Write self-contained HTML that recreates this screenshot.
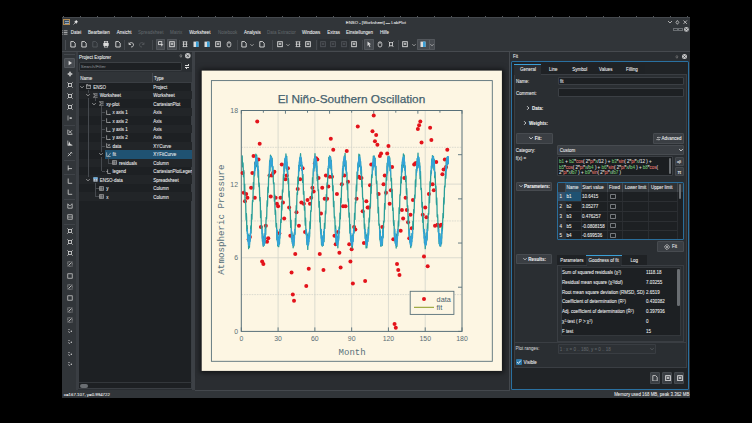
<!DOCTYPE html>
<html><head><meta charset="utf-8"><style>
html,body{margin:0;padding:0}
body{width:752px;height:423px;background:#000;overflow:hidden;position:relative;font-family:"Liberation Sans",sans-serif}
.a{position:absolute}
.t{position:absolute;white-space:nowrap;line-height:8px;height:8px;-webkit-text-stroke:0.06px currentColor}
</style></head><body>
<div class="a" style="left:62.00px;top:17.00px;width:628.00px;height:381.00px;background:#313539;"></div>
<div class="a" style="left:62.00px;top:17.00px;width:628.00px;height:0.80px;background:#44484d;"></div>
<div class="a" style="left:63.40px;top:15.90px;width:1.00px;height:1.10px;background:#5a5e62;"></div>
<div class="a" style="left:80.25px;top:15.90px;width:1.00px;height:1.10px;background:#5a5e62;"></div>
<div class="a" style="left:97.10px;top:15.90px;width:1.00px;height:1.10px;background:#5a5e62;"></div>
<div class="a" style="left:113.95px;top:15.90px;width:1.00px;height:1.10px;background:#5a5e62;"></div>
<div class="a" style="left:130.80px;top:15.90px;width:1.00px;height:1.10px;background:#5a5e62;"></div>
<div class="a" style="left:147.65px;top:15.90px;width:1.00px;height:1.10px;background:#5a5e62;"></div>
<div class="a" style="left:164.50px;top:15.90px;width:1.00px;height:1.10px;background:#5a5e62;"></div>
<div class="a" style="left:181.35px;top:15.90px;width:1.00px;height:1.10px;background:#5a5e62;"></div>
<div class="a" style="left:198.20px;top:15.90px;width:1.00px;height:1.10px;background:#5a5e62;"></div>
<div class="a" style="left:215.05px;top:15.90px;width:1.00px;height:1.10px;background:#5a5e62;"></div>
<div class="a" style="left:231.90px;top:15.90px;width:1.00px;height:1.10px;background:#5a5e62;"></div>
<div class="a" style="left:248.75px;top:15.90px;width:1.00px;height:1.10px;background:#5a5e62;"></div>
<div class="a" style="left:265.60px;top:15.90px;width:1.00px;height:1.10px;background:#5a5e62;"></div>
<div class="a" style="left:282.45px;top:15.90px;width:1.00px;height:1.10px;background:#5a5e62;"></div>
<div class="a" style="left:299.30px;top:15.90px;width:1.00px;height:1.10px;background:#5a5e62;"></div>
<div class="a" style="left:316.15px;top:15.90px;width:1.00px;height:1.10px;background:#5a5e62;"></div>
<div class="a" style="left:333.00px;top:15.90px;width:1.00px;height:1.10px;background:#5a5e62;"></div>
<div class="a" style="left:349.85px;top:15.90px;width:1.00px;height:1.10px;background:#5a5e62;"></div>
<div class="a" style="left:366.70px;top:15.90px;width:1.00px;height:1.10px;background:#5a5e62;"></div>
<div class="a" style="left:383.55px;top:15.90px;width:1.00px;height:1.10px;background:#5a5e62;"></div>
<div class="a" style="left:400.40px;top:15.90px;width:1.00px;height:1.10px;background:#5a5e62;"></div>
<div class="a" style="left:417.25px;top:15.90px;width:1.00px;height:1.10px;background:#5a5e62;"></div>
<div class="a" style="left:434.10px;top:15.90px;width:1.00px;height:1.10px;background:#5a5e62;"></div>
<div class="a" style="left:450.95px;top:15.90px;width:1.00px;height:1.10px;background:#5a5e62;"></div>
<div class="a" style="left:467.80px;top:15.90px;width:1.00px;height:1.10px;background:#5a5e62;"></div>
<div class="a" style="left:484.65px;top:15.90px;width:1.00px;height:1.10px;background:#5a5e62;"></div>
<div class="a" style="left:501.50px;top:15.90px;width:1.00px;height:1.10px;background:#5a5e62;"></div>
<div class="a" style="left:518.35px;top:15.90px;width:1.00px;height:1.10px;background:#5a5e62;"></div>
<div class="a" style="left:535.20px;top:15.90px;width:1.00px;height:1.10px;background:#5a5e62;"></div>
<div class="a" style="left:552.05px;top:15.90px;width:1.00px;height:1.10px;background:#5a5e62;"></div>
<div class="a" style="left:568.90px;top:15.90px;width:1.00px;height:1.10px;background:#5a5e62;"></div>
<div class="a" style="left:585.75px;top:15.90px;width:1.00px;height:1.10px;background:#5a5e62;"></div>
<div class="a" style="left:602.60px;top:15.90px;width:1.00px;height:1.10px;background:#5a5e62;"></div>
<div class="a" style="left:619.45px;top:15.90px;width:1.00px;height:1.10px;background:#5a5e62;"></div>
<div class="a" style="left:636.30px;top:15.90px;width:1.00px;height:1.10px;background:#5a5e62;"></div>
<div class="a" style="left:653.15px;top:15.90px;width:1.00px;height:1.10px;background:#5a5e62;"></div>
<div class="a" style="left:670.00px;top:15.90px;width:1.00px;height:1.10px;background:#5a5e62;"></div>
<div class="a" style="left:686.85px;top:15.90px;width:1.00px;height:1.10px;background:#5a5e62;"></div>
<div class="t" style="left:345.80px;top:18.70px;font-size:4.31px;color:#eceded;font-weight:normal;">ENSO - [Worksheet] — LabPlot</div>
<div class="a" style="left:62.00px;top:50.90px;width:628.00px;height:1.40px;background:#464a4f;"></div>
<div class="a" style="left:63.20px;top:19.10px;width:6.70px;height:5.80px;background:#3e4f60;box-shadow:inset 0 0 0 1px #b08850;"></div>
<div class="a" style="left:64.50px;top:20.80px;width:4.10px;height:0.60px;background:#8aa0b8;"></div>
<div class="a" style="left:64.50px;top:22.60px;width:4.10px;height:0.60px;background:#8aa0b8;"></div>
<svg class="a" style="left:72.5px;top:19.6px" width="5" height="5" viewBox="0 0 5 5"><path d="M0.5 4.5L2 3M1.6 1.8l1.6 1.6 1.3-1.8-1.1-1.1z" fill="#e8e8e8" stroke="#e8e8e8" stroke-width="0.6"/></svg>
<svg class="a" style="left:665.60px;top:18.00px;overflow:visible" width="8" height="8" viewBox="-4 -4 8 8"><path d="M-2.0 -1.0 L0 1.0 L2.0 -1.0" fill="none" stroke="#d0d0d0" stroke-width="0.8"/></svg>
<svg class="a" style="left:674.90px;top:19.60px;overflow:visible" width="4.8" height="4.8" viewBox="-2.4 -2.4 4.8 4.8"><path d="M0 -1.9L1.4249999999999998 0L0 1.9L-1.4249999999999998 0z" fill="none" stroke="#d0d0d0" stroke-width="0.75"/></svg>
<svg class="a" style="left:682.90px;top:19.80px;overflow:visible" width="4.4" height="4.4" viewBox="-2.2 -2.2 4.4 4.4"><path d="M-1.7 -1.7L1.7 1.7M1.7 -1.7L-1.7 1.7" stroke="#d0d0d0" stroke-width="0.8"/></svg>
<svg class="a" style="left:61.5px;top:29.6px" width="6" height="5" viewBox="0 0 6 5"><path d="M0.3 0.8h1M0.3 2.5h1M0.3 4.2h1M2 0.8h3.5M2 2.5h3.5M2 4.2h3.5" stroke="#d8d8d8" stroke-width="0.7"/></svg>
<div class="t" style="left:70.80px;top:28.60px;font-size:4.5px;color:#eff0f1;font-weight:normal;">Datei</div>
<div class="t" style="left:88.00px;top:28.60px;font-size:4.5px;color:#eff0f1;font-weight:normal;">Bearbeiten</div>
<div class="t" style="left:116.70px;top:28.60px;font-size:4.5px;color:#eff0f1;font-weight:normal;">Ansicht</div>
<div class="t" style="left:138.00px;top:28.60px;font-size:4.5px;color:#5f6468;font-weight:normal;">Spreadsheet</div>
<div class="t" style="left:170.00px;top:28.60px;font-size:4.5px;color:#5f6468;font-weight:normal;">Matrix</div>
<div class="t" style="left:189.20px;top:28.60px;font-size:4.5px;color:#eff0f1;font-weight:normal;">Worksheet</div>
<div class="t" style="left:217.90px;top:28.60px;font-size:4.5px;color:#5f6468;font-weight:normal;">Notebook</div>
<div class="t" style="left:244.00px;top:28.60px;font-size:4.5px;color:#eff0f1;font-weight:normal;">Analysis</div>
<div class="t" style="left:267.00px;top:28.60px;font-size:4.5px;color:#5f6468;font-weight:normal;">Data Extractor</div>
<div class="t" style="left:302.10px;top:28.60px;font-size:4.5px;color:#eff0f1;font-weight:normal;">Windows</div>
<div class="t" style="left:327.30px;top:28.60px;font-size:4.5px;color:#eff0f1;font-weight:normal;">Extras</div>
<div class="t" style="left:346.00px;top:28.60px;font-size:4.5px;color:#eff0f1;font-weight:normal;">Einstellungen</div>
<div class="t" style="left:380.00px;top:28.60px;font-size:4.5px;color:#eff0f1;font-weight:normal;">Hilfe</div>
<div class="a" style="left:673.40px;top:27.60px;width:4.40px;height:3.60px;box-shadow:inset 0 0 0 1px #6a6e72;"></div>
<div class="a" style="left:678.20px;top:27.60px;width:4.40px;height:3.60px;box-shadow:inset 0 0 0 1px #6a6e72;"></div>
<svg class="a" style="left:683.90px;top:27.00px" width="4.8" height="4.8" viewBox="-2.4 -2.4 4.8 4.8"><circle r="2.4" fill="#c4c5c6"/><path d="M-1.08 -1.08L1.08 1.08M1.08 -1.08L-1.08 1.08" stroke="#33373b" stroke-width="0.7"/></svg>
<div class="a" style="left:64.80px;top:39.50px;width:1.10px;height:10.00px;background:#4a4e53;"></div>
<svg class="a" style="left:69.90px;top:41.40px" width="6" height="6.5" viewBox="0 0 6 6.5"><path d="M0.8 0.6h2.8l1.6 1.6v3.8h-4.4z" fill="none" stroke="#dcdcdc" stroke-width="0.9"/></svg>
<svg class="a" style="left:81.20px;top:41.40px" width="6" height="6.5" viewBox="0 0 6 6.5"><path d="M0.8 0.6h2.8l1.6 1.6v3.8h-4.4z" fill="none" stroke="#dcdcdc" stroke-width="0.9"/></svg>
<svg class="a" style="left:92.40px;top:41.40px" width="6" height="6.5" viewBox="0 0 6 6.5"><path d="M0.8 0.6h2.8l1.6 1.6v3.8h-4.4z" fill="none" stroke="#55595d" stroke-width="0.9"/></svg>
<svg class="a" style="left:103.20px;top:41.40px" width="6" height="6.5" viewBox="0 0 6 6.5"><rect x="0.3" y="2" width="5.4" height="2.8" fill="#dcdcdc"/><rect x="1.3" y="0.5" width="3.4" height="1.5" fill="none" stroke="#dcdcdc" stroke-width="0.7"/><rect x="1.3" y="4.6" width="3.4" height="1.5" fill="none" stroke="#dcdcdc" stroke-width="0.7"/></svg>
<svg class="a" style="left:114.60px;top:41.40px" width="6" height="6.5" viewBox="0 0 6 6.5"><path d="M0.8 0.6h2.8l1.6 1.6v3.8h-4.4z" fill="none" stroke="#dcdcdc" stroke-width="0.9"/></svg>
<div class="a" style="left:123.60px;top:39.50px;width:0.90px;height:10.00px;background:#43474c;"></div>
<svg class="a" style="left:128.20px;top:41.40px" width="6" height="6.5" viewBox="0 0 6 6.5"><path d="M1 1.5v2h2 M1.2 3.2a2.2 2.2 0 1 1 1.8 2.8" fill="none" stroke="#dcdcdc" stroke-width="0.8"/></svg>
<svg class="a" style="left:139.20px;top:41.40px" width="6" height="6.5" viewBox="0 0 6 6.5"><path d="M5 1.5v2h-2 M4.8 3.2a2.2 2.2 0 1 0 -1.8 2.8" fill="none" stroke="#55595d" stroke-width="0.8"/></svg>
<div class="a" style="left:151.60px;top:39.50px;width:0.90px;height:10.00px;background:#43474c;"></div>
<div class="a" style="left:155.70px;top:39.20px;width:9.60px;height:10.40px;background:#474b50;box-shadow:inset 0 0 0 1px #53575c;border-radius:1px"></div>
<div class="a" style="left:166.50px;top:39.20px;width:10.10px;height:10.40px;background:#474b50;box-shadow:inset 0 0 0 1px #53575c;border-radius:1px"></div>
<svg class="a" style="left:157.70px;top:41.40px" width="6" height="6.5" viewBox="0 0 6 6.5"><rect x="0.6" y="0.6" width="3.2" height="3" fill="none" stroke="#dcdcdc" stroke-width="0.8"/><path d="M2.5 2.5l3 1.2-1.2 0.5-0.5 1.6z" fill="#dcdcdc"/></svg>
<svg class="a" style="left:168.70px;top:41.40px" width="6" height="6.5" viewBox="0 0 6 6.5"><rect x="0.7" y="0.7" width="4.6" height="5" fill="none" stroke="#dcdcdc" stroke-width="0.9"/><rect x="1.8" y="1.8" width="2.4" height="2.2" fill="#dcdcdc" opacity="0.7"/></svg>
<div class="a" style="left:179.30px;top:39.50px;width:0.90px;height:10.00px;background:#43474c;"></div>
<svg class="a" style="left:181.70px;top:41.40px" width="6" height="6.5" viewBox="0 0 6 6.5"><path d="M0.6 0.8h4.8M0.6 3.2h4.8M0.6 5.6h4.8M1.5 0.8v4.8M4.5 0.8v4.8" fill="none" stroke="#dcdcdc" stroke-width="0.8"/></svg>
<svg class="a" style="left:192.90px;top:41.40px" width="6" height="6.5" viewBox="0 0 6 6.5"><rect x="0.5" y="0.6" width="5" height="5.4" fill="#dcdcdc"/><rect x="3" y="0.6" width="2.5" height="5.4" fill="#3a9fd6"/></svg>
<svg class="a" style="left:204.40px;top:41.40px" width="6" height="6.5" viewBox="0 0 6 6.5"><rect x="0.5" y="0.6" width="5" height="5.4" fill="#dcdcdc"/><rect x="3" y="0.6" width="2.5" height="5.4" fill="#3a9fd6"/></svg>
<svg class="a" style="left:215.20px;top:41.40px" width="6" height="6.5" viewBox="0 0 6 6.5"><rect x="0.7" y="0.7" width="4.6" height="5" fill="none" stroke="#dcdcdc" stroke-width="0.9"/><rect x="1.8" y="1.8" width="2.4" height="2.2" fill="#dcdcdc" opacity="0.7"/></svg>
<svg class="a" style="left:225.90px;top:41.40px" width="6" height="6.5" viewBox="0 0 6 6.5"><rect x="1.2" y="0.8" width="3.6" height="5.2" rx="1.8" fill="none" stroke="#dcdcdc" stroke-width="0.8"/><path d="M3 1v2" stroke="#dcdcdc" stroke-width="0.7"/></svg>
<div class="a" style="left:237.40px;top:39.50px;width:0.90px;height:10.00px;background:#43474c;"></div>
<svg class="a" style="left:241.30px;top:41.40px" width="6" height="6.5" viewBox="0 0 6 6.5"><path d="M0.8 0.6h2.8l1.6 1.6v3.8h-4.4z" fill="none" stroke="#dcdcdc" stroke-width="0.9"/></svg>
<svg class="a" style="left:248.20px;top:40.60px;overflow:visible" width="8" height="8" viewBox="-4 -4 8 8"><path d="M-1.6 -0.8 L0 0.8 L1.6 -0.8" fill="none" stroke="#c8c8c8" stroke-width="0.7"/></svg>
<svg class="a" style="left:258.50px;top:41.40px" width="6" height="6.5" viewBox="0 0 6 6.5"><path d="M0.8 0.6h2.8l1.6 1.6v3.8h-4.4z" fill="none" stroke="#dcdcdc" stroke-width="0.9"/></svg>
<div class="a" style="left:271.70px;top:39.50px;width:0.90px;height:10.00px;background:#43474c;"></div>
<svg class="a" style="left:276.50px;top:41.40px" width="6" height="6.5" viewBox="0 0 6 6.5"><rect x="0.7" y="0.7" width="4.6" height="5" fill="none" stroke="#dcdcdc" stroke-width="0.9"/><rect x="1.8" y="1.8" width="2.4" height="2.2" fill="#dcdcdc" opacity="0.7"/></svg>
<svg class="a" style="left:284.10px;top:40.60px;overflow:visible" width="8" height="8" viewBox="-4 -4 8 8"><path d="M-1.6 -0.8 L0 0.8 L1.6 -0.8" fill="none" stroke="#c8c8c8" stroke-width="0.7"/></svg>
<svg class="a" style="left:294.90px;top:41.40px" width="6" height="6.5" viewBox="0 0 6 6.5"><path d="M0.6 0.8h4.8M0.6 3.2h4.8M0.6 5.6h4.8M1.5 0.8v4.8M4.5 0.8v4.8" fill="none" stroke="#dcdcdc" stroke-width="0.8"/></svg>
<svg class="a" style="left:305.20px;top:41.40px" width="6" height="6.5" viewBox="0 0 6 6.5"><rect x="0.7" y="0.7" width="4.6" height="5" fill="none" stroke="#dcdcdc" stroke-width="0.9"/><rect x="1.8" y="1.8" width="2.4" height="2.2" fill="#dcdcdc" opacity="0.7"/></svg>
<div class="a" style="left:315.60px;top:39.50px;width:0.90px;height:10.00px;background:#43474c;"></div>
<div class="a" style="left:317.60px;top:39.20px;width:31.10px;height:10.40px;background:#2c3034;border-radius:1px"></div>
<svg class="a" style="left:319.60px;top:41.40px" width="6" height="6.5" viewBox="0 0 6 6.5"><rect x="0.7" y="0.7" width="4.6" height="5" fill="none" stroke="#50545a" stroke-width="0.9"/><rect x="1.8" y="1.8" width="2.4" height="2.2" fill="#50545a" opacity="0.7"/></svg>
<svg class="a" style="left:330.30px;top:41.40px" width="6" height="6.5" viewBox="0 0 6 6.5"><rect x="0.7" y="0.7" width="4.6" height="5" fill="none" stroke="#50545a" stroke-width="0.9"/><rect x="1.8" y="1.8" width="2.4" height="2.2" fill="#50545a" opacity="0.7"/></svg>
<svg class="a" style="left:341.10px;top:41.40px" width="6" height="6.5" viewBox="0 0 6 6.5"><rect x="0.7" y="0.7" width="4.6" height="5" fill="none" stroke="#50545a" stroke-width="0.9"/><rect x="1.8" y="1.8" width="2.4" height="2.2" fill="#50545a" opacity="0.7"/></svg>
<svg class="a" style="left:351.40px;top:41.40px" width="6" height="6.5" viewBox="0 0 6 6.5"><rect x="0.7" y="0.7" width="4.6" height="5" fill="none" stroke="#dcdcdc" stroke-width="0.9"/><rect x="1.8" y="1.8" width="2.4" height="2.2" fill="#dcdcdc" opacity="0.7"/></svg>
<div class="a" style="left:361.90px;top:39.50px;width:0.90px;height:10.00px;background:#43474c;"></div>
<div class="a" style="left:364.20px;top:39.20px;width:9.60px;height:10.40px;background:#474b50;box-shadow:inset 0 0 0 1px #53575c;border-radius:1px"></div>
<svg class="a" style="left:366.10px;top:41.40px" width="6" height="6.5" viewBox="0 0 6 6.5"><path d="M1.5 0.6l3.5 2.7-1.6 0.3 1 2.2-0.8 0.4-1-2.2-1.1 1z" fill="#dcdcdc"/></svg>
<svg class="a" style="left:377.00px;top:41.40px" width="6" height="6.5" viewBox="0 0 6 6.5"><rect x="1.2" y="0.8" width="3.6" height="5.2" rx="1.8" fill="none" stroke="#dcdcdc" stroke-width="0.8"/><path d="M3 1v2" stroke="#dcdcdc" stroke-width="0.7"/></svg>
<svg class="a" style="left:388.20px;top:41.40px" width="6" height="6.5" viewBox="0 0 6 6.5"><path d="M0.6 0.6l1.4 1.4M5.4 0.6l-1.4 1.4M0.6 5.9l1.4-1.4M5.4 5.9l-1.4-1.4" stroke="#dcdcdc" stroke-width="0.8"/><rect x="1.6" y="1.7" width="2.8" height="3.1" fill="none" stroke="#dcdcdc" stroke-width="0.8"/></svg>
<div class="a" style="left:397.90px;top:39.50px;width:0.90px;height:10.00px;background:#43474c;"></div>
<svg class="a" style="left:402.10px;top:41.40px" width="6" height="6.5" viewBox="0 0 6 6.5"><rect x="0.7" y="0.7" width="4.6" height="5" fill="none" stroke="#dcdcdc" stroke-width="0.9"/><rect x="1.8" y="1.8" width="2.4" height="2.2" fill="#dcdcdc" opacity="0.7"/></svg>
<svg class="a" style="left:409.80px;top:40.60px;overflow:visible" width="8" height="8" viewBox="-4 -4 8 8"><path d="M-1.6 -0.8 L0 0.8 L1.6 -0.8" fill="none" stroke="#c8c8c8" stroke-width="0.7"/></svg>
<div class="a" style="left:417.00px;top:38.90px;width:17.90px;height:10.70px;background:#474b50;box-shadow:inset 0 0 0 1px #53575c;border-radius:1px"></div>
<div class="a" style="left:429.10px;top:39.50px;width:0.50px;height:9.50px;background:#5a5e63;"></div>
<svg class="a" style="left:420.10px;top:41.40px" width="6" height="6.5" viewBox="0 0 6 6.5"><rect x="0.5" y="0.6" width="5" height="5.4" fill="#dcdcdc"/><rect x="3" y="0.6" width="2.5" height="5.4" fill="#3a9fd6"/></svg>
<svg class="a" style="left:427.70px;top:40.60px;overflow:visible" width="8" height="8" viewBox="-4 -4 8 8"><path d="M-1.6 -0.8 L0 0.8 L1.6 -0.8" fill="none" stroke="#c8c8c8" stroke-width="0.7"/></svg>
<div class="a" style="left:64.00px;top:54.40px;width:11.00px;height:0.80px;background:#44484d;"></div>
<div class="a" style="left:64.10px;top:57.50px;width:10.90px;height:10.30px;background:#464a4f;box-shadow:inset 0 0 0 1px #53575c;border-radius:1.5px"></div>
<svg class="a" style="left:66.80px;top:60.00px" width="6" height="6" viewBox="0 0 6 6"><path d="M1.6 0.8L5 3L1.6 5.2z" fill="#d8d8d8"/></svg>
<svg class="a" style="left:66.80px;top:70.60px" width="6" height="6" viewBox="0 0 6 6"><path d="M3 0.5v5M0.5 3h5" stroke="#d8d8d8" stroke-width="0.9"/><circle cx="3" cy="3" r="1.4" fill="none" stroke="#d8d8d8" stroke-width="0.7"/></svg>
<svg class="a" style="left:66.80px;top:81.60px" width="6" height="6" viewBox="0 0 6 6"><rect x="1.5" y="1.5" width="3" height="3" fill="none" stroke="#d8d8d8" stroke-width="0.8"/><path d="M0.3 0.3l1.3 1.3M5.7 0.3l-1.3 1.3M0.3 5.7l1.3-1.3M5.7 5.7l-1.3-1.3" stroke="#d8d8d8" stroke-width="0.7"/></svg>
<svg class="a" style="left:66.80px;top:93.00px" width="6" height="6" viewBox="0 0 6 6"><rect x="1.5" y="1.5" width="3" height="3" fill="none" stroke="#d8d8d8" stroke-width="0.8"/><path d="M0.3 0.3l1.3 1.3M5.7 0.3l-1.3 1.3M0.3 5.7l1.3-1.3M5.7 5.7l-1.3-1.3" stroke="#d8d8d8" stroke-width="0.7"/></svg>
<svg class="a" style="left:66.80px;top:104.00px" width="6" height="6" viewBox="0 0 6 6"><rect x="1.5" y="1.5" width="3" height="3" fill="none" stroke="#d8d8d8" stroke-width="0.8"/><path d="M0.3 0.3l1.3 1.3M5.7 0.3l-1.3 1.3M0.3 5.7l1.3-1.3M5.7 5.7l-1.3-1.3" stroke="#d8d8d8" stroke-width="0.7"/></svg>
<svg class="a" style="left:66.80px;top:115.00px" width="6" height="6" viewBox="0 0 6 6"><path d="M1 0.5v5" stroke="#d8d8d8" stroke-width="0.6"/><rect x="2.6" y="2.2" width="2.2" height="1.8" fill="#d8d8d8" opacity="0.8"/></svg>
<svg class="a" style="left:66.80px;top:129.00px" width="6" height="6" viewBox="0 0 6 6"><path d="M0.8 0.6v4.8h4.6M1.6 1.2l3.4 3.6M5 1.2l-3 3" stroke="#d8d8d8" stroke-width="0.7" fill="none"/></svg>
<svg class="a" style="left:66.80px;top:139.90px" width="6" height="6" viewBox="0 0 6 6"><path d="M0.8 0.6v4.8h4.6" stroke="#d8d8d8" stroke-width="0.7" fill="none"/><path d="M1.2 5l1-3.5 1.2 2.5 2 1z" fill="#d8d8d8"/></svg>
<svg class="a" style="left:66.80px;top:150.80px" width="6" height="6" viewBox="0 0 6 6"><path d="M0.8 5.2l4-4M1.5 2.5l2 2M3.5 1l1.5 1.5" stroke="#d8d8d8" stroke-width="0.8"/></svg>
<svg class="a" style="left:66.80px;top:164.60px" width="6" height="6" viewBox="0 0 6 6"><path d="M1.2 0.5v5M1.2 3.6h3.8" stroke="#d8d8d8" stroke-width="0.8" fill="none"/></svg>
<svg class="a" style="left:66.80px;top:178.30px" width="6" height="6" viewBox="0 0 6 6"><path d="M1.2 0.5v4.8h4" stroke="#d8d8d8" stroke-width="0.8" fill="none"/></svg>
<svg class="a" style="left:66.80px;top:189.20px" width="6" height="6" viewBox="0 0 6 6"><path d="M1.2 0.5v4.8h4" stroke="#d8d8d8" stroke-width="0.8" fill="none"/></svg>
<svg class="a" style="left:66.80px;top:202.90px" width="6" height="6" viewBox="0 0 6 6"><path d="M0.8 0.8v4.4h4.4v-4.4M0.8 0.8l1.8 2.2 1-1 1.6-1.2" stroke="#d8d8d8" stroke-width="0.7" fill="none"/></svg>
<svg class="a" style="left:66.80px;top:214.00px" width="6" height="6" viewBox="0 0 6 6"><rect x="0.8" y="0.8" width="4.4" height="4.4" fill="none" stroke="#d8d8d8" stroke-width="0.7"/><path d="M0.8 3h4.4" stroke="#d8d8d8" stroke-width="0.6"/></svg>
<svg class="a" style="left:66.80px;top:227.50px" width="6" height="6" viewBox="0 0 6 6"><rect x="1.5" y="1.5" width="3" height="3" fill="none" stroke="#d8d8d8" stroke-width="0.8"/><path d="M0.3 0.3l1.3 1.3M5.7 0.3l-1.3 1.3M0.3 5.7l1.3-1.3M5.7 5.7l-1.3-1.3" stroke="#d8d8d8" stroke-width="0.7"/></svg>
<svg class="a" style="left:66.80px;top:238.90px" width="6" height="6" viewBox="0 0 6 6"><rect x="1.5" y="1.5" width="3" height="3" fill="none" stroke="#d8d8d8" stroke-width="0.8"/><path d="M0.3 0.3l1.3 1.3M5.7 0.3l-1.3 1.3M0.3 5.7l1.3-1.3M5.7 5.7l-1.3-1.3" stroke="#d8d8d8" stroke-width="0.7"/></svg>
<svg class="a" style="left:66.80px;top:250.00px" width="6" height="6" viewBox="0 0 6 6"><rect x="1.5" y="1.5" width="3" height="3" fill="none" stroke="#d8d8d8" stroke-width="0.8"/><path d="M0.3 0.3l1.3 1.3M5.7 0.3l-1.3 1.3M0.3 5.7l1.3-1.3M5.7 5.7l-1.3-1.3" stroke="#d8d8d8" stroke-width="0.7"/></svg>
<svg class="a" style="left:66.80px;top:261.20px" width="6" height="6" viewBox="0 0 6 6"><rect x="0.8" y="0.8" width="4.4" height="4.4" fill="none" stroke="#d8d8d8" stroke-width="0.6" stroke-dasharray="0.8 0.6"/><path d="M1.5 4.5l3-3" stroke="#d8d8d8" stroke-width="0.8"/></svg>
<svg class="a" style="left:66.80px;top:273.00px" width="6" height="6" viewBox="0 0 6 6"><rect x="0.8" y="0.8" width="4.4" height="4.4" fill="none" stroke="#d8d8d8" stroke-width="0.7"/></svg>
<svg class="a" style="left:66.80px;top:283.90px" width="6" height="6" viewBox="0 0 6 6"><rect x="0.8" y="0.8" width="4.4" height="4.4" fill="none" stroke="#d8d8d8" stroke-width="0.6" stroke-dasharray="0.8 0.6"/><path d="M1.5 4.5l3-3" stroke="#d8d8d8" stroke-width="0.8"/></svg>
<svg class="a" style="left:66.80px;top:294.80px" width="6" height="6" viewBox="0 0 6 6"><rect x="0.8" y="0.8" width="4.4" height="4.4" fill="none" stroke="#d8d8d8" stroke-width="0.7"/></svg>
<svg class="a" style="left:66.80px;top:306.70px" width="6" height="6" viewBox="0 0 6 6"><rect x="0.8" y="0.8" width="4.4" height="4.4" fill="none" stroke="#d8d8d8" stroke-width="0.6" stroke-dasharray="0.8 0.6"/><path d="M1.5 4.5l3-3" stroke="#d8d8d8" stroke-width="0.8"/></svg>
<svg class="a" style="left:66.80px;top:317.10px" width="6" height="6" viewBox="0 0 6 6"><rect x="0.8" y="0.8" width="4.4" height="4.4" fill="none" stroke="#d8d8d8" stroke-width="0.6" stroke-dasharray="0.8 0.6"/><path d="M1.5 4.5l3-3" stroke="#d8d8d8" stroke-width="0.8"/></svg>
<svg class="a" style="left:66.80px;top:328.00px" width="6" height="6" viewBox="0 0 6 6"><circle cx="2" cy="1.5" r="0.6" fill="#d8d8d8"/><circle cx="4.3" cy="3.2" r="0.7" fill="#d8d8d8"/><path d="M1.2 3.5q1 0 1.5 1.5" stroke="#d8d8d8" stroke-width="0.6" fill="none"/></svg>
<svg class="a" style="left:66.80px;top:339.40px" width="6" height="6" viewBox="0 0 6 6"><circle cx="2" cy="1.5" r="0.6" fill="#d8d8d8"/><circle cx="4.3" cy="3.2" r="0.7" fill="#d8d8d8"/><path d="M1.2 3.5q1 0 1.5 1.5" stroke="#d8d8d8" stroke-width="0.6" fill="none"/></svg>
<svg class="a" style="left:66.80px;top:351.00px" width="6" height="6" viewBox="0 0 6 6"><circle cx="2" cy="1.5" r="0.6" fill="#d8d8d8"/><circle cx="4.3" cy="3.2" r="0.7" fill="#d8d8d8"/><path d="M1.2 3.5q1 0 1.5 1.5" stroke="#d8d8d8" stroke-width="0.6" fill="none"/></svg>
<svg class="a" style="left:66.80px;top:360.60px" width="6" height="6" viewBox="0 0 6 6"><circle cx="2" cy="1.5" r="0.6" fill="#d8d8d8"/><circle cx="4.3" cy="3.2" r="0.7" fill="#d8d8d8"/><path d="M1.2 3.5q1 0 1.5 1.5" stroke="#d8d8d8" stroke-width="0.6" fill="none"/></svg>
<div class="a" style="left:64.00px;top:124.70px;width:11.00px;height:0.80px;background:#3f4348;"></div>
<div class="a" style="left:64.00px;top:160.30px;width:11.00px;height:0.80px;background:#3f4348;"></div>
<div class="a" style="left:64.00px;top:174.00px;width:11.00px;height:0.80px;background:#3f4348;"></div>
<div class="a" style="left:64.00px;top:199.00px;width:11.00px;height:0.80px;background:#3f4348;"></div>
<div class="a" style="left:64.00px;top:224.00px;width:11.00px;height:0.80px;background:#3f4348;"></div>
<div class="a" style="left:76.40px;top:52.00px;width:1.50px;height:338.00px;background:#3a3e43;"></div>
<div class="a" style="left:77.90px;top:52.10px;width:114.30px;height:338.30px;background:#2a2e32;"></div>
<div class="t" style="left:79.00px;top:53.70px;font-size:4.5px;color:#eff0f1;font-weight:normal;">Project Explorer</div>
<svg class="a" style="left:178.60px;top:54.40px;overflow:visible" width="3.8" height="3.8" viewBox="-1.9 -1.9 3.8 3.8"><path d="M0 -1.4L1.0499999999999998 0L0 1.4L-1.0499999999999998 0z" fill="none" stroke="#a8a8a8" stroke-width="0.6"/></svg>
<svg class="a" style="left:185.20px;top:53.40px" width="5.6" height="5.6" viewBox="-2.8 -2.8 5.6 5.6"><circle r="2.8" fill="#c4c5c6"/><path d="M-1.26 -1.26L1.26 1.26M1.26 -1.26L-1.26 1.26" stroke="#33373b" stroke-width="0.7"/></svg>
<div class="a" style="left:79.00px;top:61.60px;width:103.00px;height:9.10px;background:#1d2023;box-shadow:inset 0 0 0 1px #3c4044;border-radius:1.5px"></div>
<div class="t" style="left:80.80px;top:63.10px;font-size:4.4px;color:#7d8185;font-weight:normal;">Search/Filter</div>
<div class="a" style="left:184.60px;top:65.00px;width:4.80px;height:0.55px;background:#d8d8d8;"></div>
<div class="a" style="left:184.60px;top:67.40px;width:4.80px;height:0.55px;background:#d8d8d8;"></div>
<div class="a" style="left:187.60px;top:64.30px;width:0.60px;height:1.90px;background:#d8d8d8;"></div>
<div class="a" style="left:185.80px;top:66.70px;width:0.60px;height:1.90px;background:#d8d8d8;"></div>
<div class="a" style="left:78.40px;top:71.70px;width:113.90px;height:317.70px;background:#1d2023;box-shadow:inset 0 0 0 1px #3a3e43;"></div>
<div class="a" style="left:79.00px;top:72.20px;width:112.60px;height:10.20px;background:#303438;"></div>
<div class="a" style="left:152.30px;top:73.00px;width:0.60px;height:9.00px;background:#45494e;"></div>
<div class="a" style="left:79.00px;top:82.00px;width:112.60px;height:0.60px;background:#3a3e43;"></div>
<div class="t" style="left:80.20px;top:74.50px;font-size:4.5px;color:#eff0f1;font-weight:normal;">Name</div>
<div class="t" style="left:154.00px;top:74.50px;font-size:4.5px;color:#eff0f1;font-weight:normal;">Type</div>
<div class="a" style="left:79.00px;top:90.98px;width:112.60px;height:8.45px;background:#222528;"></div>
<div class="a" style="left:79.00px;top:107.88px;width:112.60px;height:8.45px;background:#222528;"></div>
<div class="a" style="left:79.00px;top:124.78px;width:112.60px;height:8.45px;background:#222528;"></div>
<div class="a" style="left:79.00px;top:141.67px;width:112.60px;height:8.45px;background:#222528;"></div>
<div class="a" style="left:104.80px;top:150.12px;width:86.80px;height:8.45px;background:#1f5272;"></div>
<div class="a" style="left:79.00px;top:158.58px;width:112.60px;height:8.45px;background:#222528;"></div>
<div class="a" style="left:79.00px;top:175.47px;width:112.60px;height:8.45px;background:#222528;"></div>
<div class="a" style="left:79.00px;top:192.38px;width:112.60px;height:8.45px;background:#222528;"></div>
<div class="a" style="left:88.35px;top:89.55px;width:0.60px;height:90.15px;background:#464a4f;"></div>
<div class="a" style="left:94.80px;top:98.00px;width:0.60px;height:5.65px;background:#464a4f;"></div>
<div class="a" style="left:101.25px;top:106.45px;width:0.60px;height:64.80px;background:#464a4f;"></div>
<div class="a" style="left:101.55px;top:111.80px;width:3.85px;height:0.60px;background:#464a4f;"></div>
<div class="a" style="left:101.55px;top:120.25px;width:3.85px;height:0.60px;background:#464a4f;"></div>
<div class="a" style="left:101.55px;top:128.70px;width:3.85px;height:0.60px;background:#464a4f;"></div>
<div class="a" style="left:101.55px;top:137.15px;width:3.85px;height:0.60px;background:#464a4f;"></div>
<div class="a" style="left:101.55px;top:145.60px;width:3.85px;height:0.60px;background:#464a4f;"></div>
<div class="a" style="left:101.55px;top:170.95px;width:3.85px;height:0.60px;background:#464a4f;"></div>
<div class="a" style="left:107.70px;top:157.15px;width:0.60px;height:5.65px;background:#464a4f;"></div>
<div class="a" style="left:108.00px;top:162.50px;width:3.85px;height:0.60px;background:#464a4f;"></div>
<div class="a" style="left:94.80px;top:182.50px;width:0.60px;height:14.10px;background:#464a4f;"></div>
<div class="a" style="left:95.10px;top:187.85px;width:3.85px;height:0.60px;background:#464a4f;"></div>
<div class="a" style="left:95.10px;top:196.30px;width:3.85px;height:0.60px;background:#464a4f;"></div>
<div class="a" style="left:79.05px;top:84.25px;width:5.00px;height:5.00px;background:#1d2023;"></div>
<svg class="a" style="left:77.55px;top:82.75px;overflow:visible" width="8" height="8" viewBox="-4 -4 8 8"><path d="M-1.7 -0.85 L0 0.85 L1.7 -0.85" fill="none" stroke="#c8c8c8" stroke-width="0.7"/></svg>
<svg class="a" style="left:86.15px;top:84.25px" width="5" height="5" viewBox="0 0 5 5"><path d="M0.4 0.6h1.6l0.5 0.6h2.1v3.4h-4.2z M0.4 1.8h4.2" fill="none" stroke="#d0d0d0" stroke-width="0.6"/></svg>
<div class="t" style="left:93.25px;top:83.75px;font-size:4.5px;color:#eff0f1;font-weight:normal;">ENSO</div>
<div class="t" style="left:153.30px;top:83.75px;font-size:4.5px;color:#eff0f1;font-weight:normal;">Project</div>
<div class="a" style="left:85.50px;top:92.70px;width:5.00px;height:5.00px;background:#222528;"></div>
<svg class="a" style="left:84.00px;top:91.20px;overflow:visible" width="8" height="8" viewBox="-4 -4 8 8"><path d="M-1.7 -0.85 L0 0.85 L1.7 -0.85" fill="none" stroke="#c8c8c8" stroke-width="0.7"/></svg>
<svg class="a" style="left:92.60px;top:92.70px" width="5" height="5" viewBox="0 0 5 5"><path d="M0.4 0.8h4.2M0.4 0.8l2 1.7-2 1.7h4.2M2.6 2.2h2" fill="none" stroke="#d0d0d0" stroke-width="0.6"/></svg>
<div class="t" style="left:99.70px;top:92.20px;font-size:4.5px;color:#eff0f1;font-weight:normal;">Worksheet</div>
<div class="t" style="left:153.30px;top:92.20px;font-size:4.5px;color:#eff0f1;font-weight:normal;">Worksheet</div>
<div class="a" style="left:91.95px;top:101.15px;width:5.00px;height:5.00px;background:#1d2023;"></div>
<svg class="a" style="left:90.45px;top:99.65px;overflow:visible" width="8" height="8" viewBox="-4 -4 8 8"><path d="M-1.7 -0.85 L0 0.85 L1.7 -0.85" fill="none" stroke="#c8c8c8" stroke-width="0.7"/></svg>
<svg class="a" style="left:99.05px;top:101.15px" width="5" height="5" viewBox="0 0 5 5"><path d="M0.4 0.8h4.2M0.4 0.8l2 1.7-2 1.7h4.2M2.6 2.2h2" fill="none" stroke="#d0d0d0" stroke-width="0.6"/></svg>
<div class="t" style="left:106.15px;top:100.65px;font-size:4.5px;color:#eff0f1;font-weight:normal;">xy-plot</div>
<div class="t" style="left:153.30px;top:100.65px;font-size:4.5px;color:#eff0f1;font-weight:normal;">CartesianPlot</div>
<svg class="a" style="left:105.50px;top:109.60px" width="5" height="5" viewBox="0 0 5 5"><path d="M0.6 0.3v4.2h4.1M3.6 3.8v0.7" fill="none" stroke="#d0d0d0" stroke-width="0.6"/></svg>
<div class="t" style="left:112.60px;top:109.10px;font-size:4.5px;color:#eff0f1;font-weight:normal;">x axis 1</div>
<div class="t" style="left:153.30px;top:109.10px;font-size:4.5px;color:#eff0f1;font-weight:normal;">Axis</div>
<svg class="a" style="left:105.50px;top:118.05px" width="5" height="5" viewBox="0 0 5 5"><path d="M0.6 0.3v4.2h4.1M3.6 3.8v0.7" fill="none" stroke="#d0d0d0" stroke-width="0.6"/></svg>
<div class="t" style="left:112.60px;top:117.55px;font-size:4.5px;color:#eff0f1;font-weight:normal;">x axis 2</div>
<div class="t" style="left:153.30px;top:117.55px;font-size:4.5px;color:#eff0f1;font-weight:normal;">Axis</div>
<svg class="a" style="left:105.50px;top:126.50px" width="5" height="5" viewBox="0 0 5 5"><path d="M0.6 0.3v4.2h4.1M3.6 3.8v0.7" fill="none" stroke="#d0d0d0" stroke-width="0.6"/></svg>
<div class="t" style="left:112.60px;top:126.00px;font-size:4.5px;color:#eff0f1;font-weight:normal;">y axis 1</div>
<div class="t" style="left:153.30px;top:126.00px;font-size:4.5px;color:#eff0f1;font-weight:normal;">Axis</div>
<svg class="a" style="left:105.50px;top:134.95px" width="5" height="5" viewBox="0 0 5 5"><path d="M0.6 0.3v4.2h4.1M3.6 3.8v0.7" fill="none" stroke="#d0d0d0" stroke-width="0.6"/></svg>
<div class="t" style="left:112.60px;top:134.45px;font-size:4.5px;color:#eff0f1;font-weight:normal;">y axis 2</div>
<div class="t" style="left:153.30px;top:134.45px;font-size:4.5px;color:#eff0f1;font-weight:normal;">Axis</div>
<svg class="a" style="left:105.50px;top:143.40px" width="5" height="5" viewBox="0 0 5 5"><path d="M0.6 0.3v4.2h4.1M1.6 1l2.6 2.6M4.2 1l-2.6 2.6" fill="none" stroke="#d0d0d0" stroke-width="0.6"/></svg>
<div class="t" style="left:112.60px;top:142.90px;font-size:4.5px;color:#eff0f1;font-weight:normal;">data</div>
<div class="t" style="left:153.30px;top:142.90px;font-size:4.5px;color:#eff0f1;font-weight:normal;">XYCurve</div>
<div class="a" style="left:98.40px;top:151.85px;width:5.00px;height:5.00px;background:#1d2023;"></div>
<svg class="a" style="left:96.90px;top:150.35px;overflow:visible" width="8" height="8" viewBox="-4 -4 8 8"><path d="M-1.7 -0.85 L0 0.85 L1.7 -0.85" fill="none" stroke="#c8c8c8" stroke-width="0.7"/></svg>
<svg class="a" style="left:105.50px;top:151.85px" width="5" height="5" viewBox="0 0 5 5"><path d="M0.6 0.3v4.2h4.1M1.5 2.8l1 1 2.2-3" fill="none" stroke="#d0d0d0" stroke-width="0.6"/></svg>
<div class="t" style="left:112.60px;top:151.35px;font-size:4.5px;color:#eff0f1;font-weight:normal;">fit</div>
<div class="t" style="left:153.30px;top:151.35px;font-size:4.5px;color:#eff0f1;font-weight:normal;">XYFitCurve</div>
<svg class="a" style="left:111.95px;top:160.30px" width="5" height="5" viewBox="0 0 5 5"><path d="M0.5 0.5h4v4h-4zM0.5 2h4M0.5 3.2h4M2 0.5v4" fill="none" stroke="#d0d0d0" stroke-width="0.5"/></svg>
<div class="t" style="left:119.05px;top:159.80px;font-size:4.5px;color:#eff0f1;font-weight:normal;">residuals</div>
<div class="t" style="left:153.30px;top:159.80px;font-size:4.5px;color:#eff0f1;font-weight:normal;">Column</div>
<svg class="a" style="left:105.50px;top:168.75px" width="5" height="5" viewBox="0 0 5 5"><path d="M1.6 0.3v4.2h3.2M0.3 2.5h1.3" fill="none" stroke="#d0d0d0" stroke-width="0.6"/></svg>
<div class="t" style="left:112.60px;top:168.25px;font-size:4.5px;color:#eff0f1;font-weight:normal;">legend</div>
<div class="t" style="left:153.30px;top:168.25px;font-size:4.5px;color:#eff0f1;font-weight:normal;">CartesianPlotLegend</div>
<div class="a" style="left:85.50px;top:177.20px;width:5.00px;height:5.00px;background:#222528;"></div>
<svg class="a" style="left:84.00px;top:175.70px;overflow:visible" width="8" height="8" viewBox="-4 -4 8 8"><path d="M-1.7 -0.85 L0 0.85 L1.7 -0.85" fill="none" stroke="#c8c8c8" stroke-width="0.7"/></svg>
<svg class="a" style="left:92.60px;top:177.20px" width="5" height="5" viewBox="0 0 5 5"><rect x="0.4" y="0.4" width="4.2" height="4.2" fill="#c8d8e8"/><rect x="0.4" y="0.4" width="4.2" height="1.4" fill="#5aa6dc"/><path d="M0.4 3.2h4.2M2.5 1.8v2.8" stroke="#555" stroke-width="0.4"/></svg>
<div class="t" style="left:99.70px;top:176.70px;font-size:4.5px;color:#eff0f1;font-weight:normal;">ENSO-data</div>
<div class="t" style="left:153.30px;top:176.70px;font-size:4.5px;color:#eff0f1;font-weight:normal;">Spreadsheet</div>
<svg class="a" style="left:99.05px;top:185.65px" width="5" height="5" viewBox="0 0 5 5"><path d="M0.5 0.5h4v4h-4zM0.5 2h4M0.5 3.2h4M2 0.5v4" fill="none" stroke="#d0d0d0" stroke-width="0.5"/></svg>
<div class="t" style="left:106.15px;top:185.15px;font-size:4.5px;color:#eff0f1;font-weight:normal;">y</div>
<div class="t" style="left:153.30px;top:185.15px;font-size:4.5px;color:#eff0f1;font-weight:normal;">Column</div>
<svg class="a" style="left:99.05px;top:194.10px" width="5" height="5" viewBox="0 0 5 5"><path d="M0.5 0.5h4v4h-4zM0.5 2h4M0.5 3.2h4M2 0.5v4" fill="none" stroke="#d0d0d0" stroke-width="0.5"/></svg>
<div class="t" style="left:106.15px;top:193.60px;font-size:4.5px;color:#eff0f1;font-weight:normal;">x</div>
<div class="t" style="left:153.30px;top:193.60px;font-size:4.5px;color:#eff0f1;font-weight:normal;">Column</div>
<div class="a" style="left:79.00px;top:382.00px;width:112.60px;height:0.60px;background:#33373b;"></div>
<div class="a" style="left:80px;top:384.3px;width:8.4px;height:3.4px;border-radius:2px;background:#6a6e72"></div>
<div class="a" style="left:192.20px;top:52.00px;width:2.80px;height:338.40px;background:#3d4146;"></div>
<div class="a" style="left:195.00px;top:52.00px;width:314.60px;height:337.60px;background:#2a2d31;"></div>
<div class="a" style="left:509.40px;top:52.00px;width:1.00px;height:338.20px;background:#44484d;"></div>
<div class="a" style="left:195.00px;top:389.60px;width:315.40px;height:0.90px;background:#44484d;"></div>
<div class="a" style="left:201.7px;top:70.6px;width:300.2px;height:300.3px;box-shadow:0 0 5px 2px rgba(0,0,0,0.55)"></div>
<div class="t" style="left:63.80px;top:390.90px;font-size:4.4px;color:#eceef0;font-weight:normal;">x=167.107, y=0.994722</div>
<div class="t" style="left:614.20px;top:391.30px;font-size:4.41px;color:#eceef0;font-weight:normal;">Memory used 168 MB, peak 3.362 MB</div>
<div class="a" style="left:510.40px;top:52.10px;width:179.60px;height:338.30px;background:#2a2e32;"></div>
<div class="t" style="left:513.00px;top:53.30px;font-size:4.5px;color:#eff0f1;font-weight:normal;">Fit</div>
<svg class="a" style="left:675.10px;top:54.70px;overflow:visible" width="3.8" height="3.8" viewBox="-1.9 -1.9 3.8 3.8"><path d="M0 -1.4L1.0499999999999998 0L0 1.4L-1.0499999999999998 0z" fill="none" stroke="#8a8a8a" stroke-width="0.6"/></svg>
<svg class="a" style="left:681.90px;top:54.10px" width="5.0" height="5.0" viewBox="-2.5 -2.5 5.0 5.0"><circle r="2.5" fill="#c4c5c6"/><path d="M-1.125 -1.125L1.125 1.125M1.125 -1.125L-1.125 1.125" stroke="#33373b" stroke-width="0.7"/></svg>
<div class="a" style="left:511.00px;top:61.20px;width:178.20px;height:328.60px;background:#202326;box-shadow:inset 0 0 0 1px #2a70a0;border-radius:1.5px"></div>
<div class="a" style="left:514.00px;top:64.00px;width:131.30px;height:10.20px;background:#1f2225;"></div>
<div class="a" style="left:514.30px;top:64.00px;width:26.30px;height:10.60px;background:#2a2e32;"></div>
<div class="a" style="left:514.30px;top:64.00px;width:26.30px;height:0.90px;background:#3a9fd6;"></div>
<div class="a" style="left:514.00px;top:74.00px;width:172.50px;height:293.70px;background:#2a2e32;box-shadow:inset 0 0 0 1px #3a3e43;"></div>
<div class="a" style="left:514.30px;top:73.50px;width:26.30px;height:1.50px;background:#2a2e32;"></div>
<div class="t" style="left:520.00px;top:66.00px;font-size:4.5px;color:#eff0f1;font-weight:normal;">General</div>
<div class="t" style="left:548.90px;top:66.00px;font-size:4.5px;color:#eff0f1;font-weight:normal;">Line</div>
<div class="t" style="left:572.20px;top:66.00px;font-size:4.5px;color:#eff0f1;font-weight:normal;">Symbol</div>
<div class="t" style="left:599.00px;top:66.00px;font-size:4.5px;color:#eff0f1;font-weight:normal;">Values</div>
<div class="t" style="left:625.90px;top:66.00px;font-size:4.5px;color:#eff0f1;font-weight:normal;">Filling</div>
<div class="t" style="left:515.90px;top:77.90px;font-size:4.5px;color:#eff0f1;font-weight:normal;">Name:</div>
<div class="a" style="left:558.20px;top:76.60px;width:125.60px;height:8.90px;background:#1d2023;box-shadow:inset 0 0 0 1px #3b3f44;border-radius:1px"></div>
<div class="t" style="left:560.00px;top:77.70px;font-size:4.5px;color:#eff0f1;font-weight:normal;">fit</div>
<div class="t" style="left:515.90px;top:89.70px;font-size:4.5px;color:#eff0f1;font-weight:normal;">Comment:</div>
<div class="a" style="left:558.20px;top:87.60px;width:125.60px;height:9.40px;background:#1d2023;box-shadow:inset 0 0 0 1px #3b3f44;border-radius:1px"></div>
<svg class="a" style="left:524.00px;top:104.30px;overflow:visible" width="8" height="8" viewBox="-4 -4 8 8"><path d="M-0.9 -1.8 L0.9 0 L-0.9 1.8" fill="none" stroke="#eff0f1" stroke-width="0.8"/></svg>
<div class="t" style="left:532.00px;top:104.90px;font-size:4.5px;color:#eff0f1;font-weight:bold;">Data:</div>
<svg class="a" style="left:521.00px;top:119.10px;overflow:visible" width="8" height="8" viewBox="-4 -4 8 8"><path d="M-0.9 -1.8 L0.9 0 L-0.9 1.8" fill="none" stroke="#eff0f1" stroke-width="0.8"/></svg>
<div class="t" style="left:529.00px;top:119.80px;font-size:4.5px;color:#eff0f1;font-weight:bold;">Weights:</div>
<div class="a" style="left:516.30px;top:133.00px;width:36.70px;height:10.80px;background:#3a3e43;box-shadow:inset 0 0 0 1px #474b50;border-radius:1.5px"></div>
<svg class="a" style="left:526.60px;top:134.30px;overflow:visible" width="8" height="8" viewBox="-4 -4 8 8"><path d="M-1.8 -0.9 L0 0.9 L1.8 -0.9" fill="none" stroke="#eff0f1" stroke-width="0.8"/></svg>
<div class="t" style="left:534.70px;top:135.00px;font-size:4.5px;color:#eff0f1;font-weight:bold;">Fit:</div>
<div class="a" style="left:653.20px;top:133.10px;width:30.80px;height:10.60px;background:#3a3e43;box-shadow:inset 0 0 0 1px #474b50;border-radius:1.5px"></div>
<svg class="a" style="left:655.5px;top:135.5px;overflow:visible" width="5" height="5" viewBox="0 0 5 5"><path d="M1.5 1.6h3.2M0.3 3.6h3.2M2.2 1.0L1.4 1.6L2.2 2.2M2.8 3.0L3.6 3.6L2.8 4.2" fill="none" stroke="#e0e0e0" stroke-width="0.6"/></svg>
<div class="t" style="left:661.50px;top:135.10px;font-size:4.5px;color:#eff0f1;font-weight:normal;">Advanced</div>
<div class="t" style="left:515.80px;top:146.80px;font-size:4.5px;color:#eff0f1;font-weight:normal;">Category:</div>
<div class="a" style="left:557.30px;top:144.90px;width:127.10px;height:10.00px;background:#3a3e43;box-shadow:inset 0 0 0 1px #474b50;border-radius:1.5px"></div>
<div class="t" style="left:559.80px;top:146.70px;font-size:4.5px;color:#eff0f1;font-weight:normal;">Custom</div>
<svg class="a" style="left:676.50px;top:146.00px;overflow:visible" width="8" height="8" viewBox="-4 -4 8 8"><path d="M-1.8 -0.9 L0 0.9 L1.8 -0.9" fill="none" stroke="#eff0f1" stroke-width="0.8"/></svg>
<div class="t" style="left:515.80px;top:155.10px;font-size:4.5px;color:#eff0f1;font-weight:normal;">f(x) =</div>
<div class="a" style="left:557.30px;top:156.40px;width:116.10px;height:19.70px;background:#1b1e21;box-shadow:inset 0 0 0 1px #3b3f44;border-radius:1px"></div>
<div class="a" style="left:668.8px;top:158px;width:2.6px;height:16px;border-radius:1.3px;background:#6a6e72"></div>
<div class="a" style="left:675.00px;top:157.00px;width:9.20px;height:9.00px;background:#3a3e43;box-shadow:inset 0 0 0 1px #474b50;border-radius:1.5px"></div>
<div class="t" style="left:677.00px;top:158.20px;font-size:3.6px;color:#eff0f1;font-weight:normal;">αβ</div>
<div class="a" style="left:675.00px;top:167.00px;width:9.20px;height:9.00px;background:#3a3e43;box-shadow:inset 0 0 0 1px #474b50;border-radius:1.5px"></div>
<div class="t" style="left:677.50px;top:168.20px;font-size:5.5px;color:#eff0f1;font-weight:normal;">π</div>
<div class="t" style="left:559.00px;top:157.90px;font-size:4.5px;color:#e3e5e7;font-weight:normal;"><span style="color:#72c472">b1</span><span style="color:#e3e5e7"> + </span><span style="color:#72c472">b2</span><span style="color:#e3e5e7">*</span><span style="color:#e2776c">cos</span><span style="color:#e3e5e7">( 2*</span><span style="color:#e2776c">pi</span><span style="color:#e3e5e7">*</span><span style="color:#72c472">x</span><span style="color:#e3e5e7">/12 ) + </span><span style="color:#72c472">b3</span><span style="color:#e3e5e7">*</span><span style="color:#e2776c">sin</span><span style="color:#e3e5e7">( 2*</span><span style="color:#e2776c">pi</span><span style="color:#e3e5e7">*</span><span style="color:#72c472">x</span><span style="color:#e3e5e7">/12 ) +</span></div>
<div class="t" style="left:559.00px;top:163.70px;font-size:4.5px;color:#e3e5e7;font-weight:normal;"><span style="color:#72c472">b5</span><span style="color:#e3e5e7">*</span><span style="color:#e2776c">cos</span><span style="color:#e3e5e7">( 2*</span><span style="color:#e2776c">pi</span><span style="color:#e3e5e7">*</span><span style="color:#72c472">x</span><span style="color:#e3e5e7">/</span><span style="color:#72c472">b4</span><span style="color:#e3e5e7"> ) + </span><span style="color:#72c472">b6</span><span style="color:#e3e5e7">*</span><span style="color:#e2776c">sin</span><span style="color:#e3e5e7">( 2*</span><span style="color:#e2776c">pi</span><span style="color:#e3e5e7">*</span><span style="color:#72c472">x</span><span style="color:#e3e5e7">/</span><span style="color:#72c472">b4</span><span style="color:#e3e5e7"> ) + </span><span style="color:#72c472">b8</span><span style="color:#e3e5e7">*</span><span style="color:#e2776c">cos</span><span style="color:#e3e5e7">(</span></div>
<div class="t" style="left:559.00px;top:169.40px;font-size:4.5px;color:#e3e5e7;font-weight:normal;"><span style="color:#e3e5e7">2*</span><span style="color:#e2776c">pi</span><span style="color:#e3e5e7">*</span><span style="color:#72c472">x</span><span style="color:#e3e5e7">/</span><span style="color:#72c472">b7</span><span style="color:#e3e5e7"> ) + </span><span style="color:#72c472">b9</span><span style="color:#e3e5e7">*</span><span style="color:#e2776c">sin</span><span style="color:#e3e5e7">( 2*</span><span style="color:#e2776c">pi</span><span style="color:#e3e5e7">*</span><span style="color:#72c472">x</span><span style="color:#e3e5e7">/</span><span style="color:#72c472">b7</span><span style="color:#e3e5e7"> )</span></div>
<div class="a" style="left:516.40px;top:182.00px;width:36.10px;height:8.70px;background:#3a3e43;box-shadow:inset 0 0 0 1px #474b50;border-radius:1.5px"></div>
<svg class="a" style="left:516.50px;top:182.40px;overflow:visible" width="8" height="8" viewBox="-4 -4 8 8"><path d="M-1.6 -0.8 L0 0.8 L1.6 -0.8" fill="none" stroke="#eff0f1" stroke-width="0.7"/></svg>
<div class="t" style="left:524.00px;top:183.10px;font-size:4.5px;color:#eff0f1;font-weight:bold;">Parameters:</div>
<div class="a" style="left:557.30px;top:181.80px;width:127.10px;height:58.20px;background:#1d2023;box-shadow:inset 0 0 0 1px #2a6d9a;border-radius:1.5px"></div>
<div class="a" style="left:558.30px;top:182.80px;width:125.10px;height:9.00px;background:#2f3337;"></div>
<div class="a" style="left:565.00px;top:182.80px;width:15.80px;height:9.00px;background:#2b4a60;"></div>
<div class="a" style="left:564.70px;top:182.80px;width:0.60px;height:9.00px;background:#45494e;"></div>
<div class="a" style="left:564.75px;top:191.80px;width:0.50px;height:47.20px;background:#2a2d31;"></div>
<div class="a" style="left:580.50px;top:182.80px;width:0.60px;height:9.00px;background:#45494e;"></div>
<div class="a" style="left:580.55px;top:191.80px;width:0.50px;height:47.20px;background:#2a2d31;"></div>
<div class="a" style="left:606.50px;top:182.80px;width:0.60px;height:9.00px;background:#45494e;"></div>
<div class="a" style="left:606.55px;top:191.80px;width:0.50px;height:47.20px;background:#2a2d31;"></div>
<div class="a" style="left:621.70px;top:182.80px;width:0.60px;height:9.00px;background:#45494e;"></div>
<div class="a" style="left:621.75px;top:191.80px;width:0.50px;height:47.20px;background:#2a2d31;"></div>
<div class="a" style="left:648.20px;top:182.80px;width:0.60px;height:9.00px;background:#45494e;"></div>
<div class="a" style="left:648.25px;top:191.80px;width:0.50px;height:47.20px;background:#2a2d31;"></div>
<div class="a" style="left:676.50px;top:182.80px;width:0.60px;height:9.00px;background:#45494e;"></div>
<div class="a" style="left:676.55px;top:191.80px;width:0.50px;height:47.20px;background:#2a2d31;"></div>
<div class="t" style="left:566.50px;top:183.90px;font-size:4.5px;color:#eff0f1;font-weight:normal;">Name</div>
<div class="t" style="left:582.30px;top:183.90px;font-size:4.5px;color:#eff0f1;font-weight:normal;">Start value</div>
<div class="t" style="left:609.00px;top:183.90px;font-size:4.5px;color:#eff0f1;font-weight:normal;">Fixed</div>
<div class="t" style="left:624.80px;top:183.90px;font-size:4.5px;color:#eff0f1;font-weight:normal;">Lower limit</div>
<div class="t" style="left:651.00px;top:183.90px;font-size:4.5px;color:#eff0f1;font-weight:normal;">Upper limit</div>
<div class="a" style="left:558.30px;top:191.80px;width:6.70px;height:47.20px;background:#2a2e32;"></div>
<div class="a" style="left:558.30px;top:201.25px;width:118.50px;height:0.50px;background:#2c2f33;"></div>
<div class="a" style="left:565.00px;top:191.80px;width:15.80px;height:9.50px;background:#1f5272;"></div>
<div class="a" style="left:558.30px;top:191.80px;width:6.70px;height:9.50px;background:#34506a;"></div>
<div class="t" style="left:559.60px;top:193.40px;font-size:4.5px;color:#eff0f1;font-weight:normal;">1</div>
<div class="t" style="left:566.50px;top:193.40px;font-size:4.5px;color:#eff0f1;font-weight:normal;">b1</div>
<div class="t" style="left:582.00px;top:193.40px;font-size:4.5px;color:#eff0f1;font-weight:normal;">10.6415</div>
<div class="a" style="left:610.00px;top:194.20px;width:5.60px;height:5.10px;box-shadow:inset 0 0 0 1px #75797d;border-radius:0.8px"></div>
<div class="a" style="left:558.30px;top:210.95px;width:118.50px;height:0.50px;background:#2c2f33;"></div>
<div class="t" style="left:559.60px;top:203.10px;font-size:4.5px;color:#eff0f1;font-weight:normal;">2</div>
<div class="t" style="left:566.50px;top:203.10px;font-size:4.5px;color:#eff0f1;font-weight:normal;">b2</div>
<div class="t" style="left:582.00px;top:203.10px;font-size:4.5px;color:#eff0f1;font-weight:normal;">3.05277</div>
<div class="a" style="left:610.00px;top:203.90px;width:5.60px;height:5.10px;box-shadow:inset 0 0 0 1px #75797d;border-radius:0.8px"></div>
<div class="a" style="left:558.30px;top:220.65px;width:118.50px;height:0.50px;background:#2c2f33;"></div>
<div class="t" style="left:559.60px;top:212.80px;font-size:4.5px;color:#eff0f1;font-weight:normal;">3</div>
<div class="t" style="left:566.50px;top:212.80px;font-size:4.5px;color:#eff0f1;font-weight:normal;">b3</div>
<div class="t" style="left:582.00px;top:212.80px;font-size:4.5px;color:#eff0f1;font-weight:normal;">0.476257</div>
<div class="a" style="left:610.00px;top:213.60px;width:5.60px;height:5.10px;box-shadow:inset 0 0 0 1px #75797d;border-radius:0.8px"></div>
<div class="a" style="left:558.30px;top:230.35px;width:118.50px;height:0.50px;background:#2c2f33;"></div>
<div class="t" style="left:559.60px;top:222.50px;font-size:4.5px;color:#eff0f1;font-weight:normal;">4</div>
<div class="t" style="left:566.50px;top:222.50px;font-size:4.5px;color:#eff0f1;font-weight:normal;">b5</div>
<div class="t" style="left:582.00px;top:222.50px;font-size:4.5px;color:#eff0f1;font-weight:normal;">-0.0808158</div>
<div class="a" style="left:610.00px;top:223.30px;width:5.60px;height:5.10px;box-shadow:inset 0 0 0 1px #75797d;border-radius:0.8px"></div>
<div class="a" style="left:558.30px;top:240.05px;width:118.50px;height:0.50px;background:#2c2f33;"></div>
<div class="t" style="left:559.60px;top:232.20px;font-size:4.5px;color:#eff0f1;font-weight:normal;">5</div>
<div class="t" style="left:566.50px;top:232.20px;font-size:4.5px;color:#eff0f1;font-weight:normal;">b4</div>
<div class="t" style="left:582.00px;top:232.20px;font-size:4.5px;color:#eff0f1;font-weight:normal;">-0.699536</div>
<div class="a" style="left:610.00px;top:233.00px;width:5.60px;height:5.10px;box-shadow:inset 0 0 0 1px #75797d;border-radius:0.8px"></div>
<div class="a" style="left:678.6px;top:184px;width:2.8px;height:15px;border-radius:1.4px;background:#6a6e72"></div>
<div class="a" style="left:657.30px;top:241.30px;width:26.60px;height:10.70px;background:#3a3e43;box-shadow:inset 0 0 0 1px #474b50;border-radius:1.5px"></div>
<svg class="a" style="left:664.3px;top:243.6px;overflow:visible" width="6" height="6" viewBox="0 0 6 6"><path d="M3 0.3L5.7 3L3 5.7L0.3 3z M1.65 1.65L4.35 4.35M4.35 1.65L1.65 4.35" fill="none" stroke="#e0e0e0" stroke-width="0.6"/></svg>
<div class="t" style="left:671.90px;top:243.30px;font-size:4.5px;color:#eff0f1;font-weight:normal;">Fit</div>
<div class="a" style="left:516.40px;top:254.40px;width:36.10px;height:9.60px;background:#3a3e43;box-shadow:inset 0 0 0 1px #474b50;border-radius:1.5px"></div>
<svg class="a" style="left:521.00px;top:255.20px;overflow:visible" width="8" height="8" viewBox="-4 -4 8 8"><path d="M-1.6 -0.8 L0 0.8 L1.6 -0.8" fill="none" stroke="#eff0f1" stroke-width="0.7"/></svg>
<div class="t" style="left:528.30px;top:255.90px;font-size:4.5px;color:#eff0f1;font-weight:bold;">Results:</div>
<div class="a" style="left:557.00px;top:255.00px;width:90.00px;height:10.20px;background:#1f2225;"></div>
<div class="a" style="left:586.40px;top:254.60px;width:35.30px;height:11.00px;background:#2a2e32;"></div>
<div class="a" style="left:586.40px;top:254.60px;width:35.30px;height:0.90px;background:#3a9fd6;"></div>
<div class="a" style="left:557.30px;top:265.00px;width:127.10px;height:76.50px;background:#2a2e32;box-shadow:inset 0 0 0 1px #3a3e43;"></div>
<div class="a" style="left:586.90px;top:264.50px;width:34.30px;height:1.50px;background:#2a2e32;"></div>
<div class="t" style="left:560.30px;top:256.80px;font-size:4.5px;color:#eff0f1;font-weight:normal;">Parameters</div>
<div class="t" style="left:588.50px;top:256.80px;font-size:4.5px;color:#eff0f1;font-weight:normal;">Goodness of fit</div>
<div class="t" style="left:630.60px;top:256.80px;font-size:4.5px;color:#eff0f1;font-weight:normal;">Log</div>
<div class="a" style="left:560.50px;top:267.20px;width:120.50px;height:69.20px;background:#1d2023;box-shadow:inset 0 0 0 1px #34383c;"></div>
<div class="t" style="left:562.00px;top:269.00px;font-size:4.5px;color:#eff0f1;font-weight:normal;">Sum of squared residuals (χ<span style='font-size:3px;position:relative;top:-1.3px'>2</span>)</div>
<div class="t" style="left:646.00px;top:269.00px;font-size:4.5px;color:#eff0f1;font-weight:normal;">1118.18</div>
<div class="t" style="left:562.00px;top:278.80px;font-size:4.5px;color:#eff0f1;font-weight:normal;">Residual mean square (χ<span style='font-size:3px;position:relative;top:-1.3px'>2</span>/dof)</div>
<div class="t" style="left:646.00px;top:278.80px;font-size:4.5px;color:#eff0f1;font-weight:normal;">7.03255</div>
<div class="t" style="left:562.00px;top:288.60px;font-size:4.5px;color:#eff0f1;font-weight:normal;">Root mean square deviation (RMSD, SD)</div>
<div class="t" style="left:646.00px;top:288.60px;font-size:4.5px;color:#eff0f1;font-weight:normal;">2.6519</div>
<div class="t" style="left:562.00px;top:298.40px;font-size:4.5px;color:#eff0f1;font-weight:normal;">Coefficient of determination (R<span style='font-size:3px;position:relative;top:-1.3px'>2</span>)</div>
<div class="t" style="left:646.00px;top:298.40px;font-size:4.5px;color:#eff0f1;font-weight:normal;">0.430382</div>
<div class="t" style="left:562.00px;top:308.20px;font-size:4.5px;color:#eff0f1;font-weight:normal;">Adj. coefficient of determination (R̄<span style='font-size:3px;position:relative;top:-1.3px'>2</span>)</div>
<div class="t" style="left:646.00px;top:308.20px;font-size:4.5px;color:#eff0f1;font-weight:normal;">0.397936</div>
<div class="t" style="left:562.00px;top:318.00px;font-size:4.5px;color:#eff0f1;font-weight:normal;">χ<span style='font-size:3px;position:relative;top:-1.3px'>2</span>-test ( P &gt; χ<span style='font-size:3px;position:relative;top:-1.3px'>2</span>)</div>
<div class="t" style="left:646.00px;top:318.00px;font-size:4.5px;color:#eff0f1;font-weight:normal;">0</div>
<div class="t" style="left:562.00px;top:327.80px;font-size:4.5px;color:#eff0f1;font-weight:normal;">F test</div>
<div class="t" style="left:646.00px;top:327.80px;font-size:4.5px;color:#eff0f1;font-weight:normal;">15</div>
<div class="a" style="left:677.4px;top:268.8px;width:2.6px;height:37px;border-radius:1.3px;background:#6a6e72"></div>
<div class="a" style="left:514.50px;top:341.90px;width:171.50px;height:0.70px;background:#3a3e43;"></div>
<div class="t" style="left:515.60px;top:345.30px;font-size:4.5px;color:#c9cbcd;font-weight:normal;">Plot ranges:</div>
<div class="a" style="left:557.50px;top:344.00px;width:98.20px;height:9.50px;background:#2d3135;box-shadow:inset 0 0 0 1px #393d42;border-radius:1px"></div>
<div class="t" style="left:559.80px;top:345.50px;font-size:4.5px;color:#62676b;font-weight:normal;">1 : x = 0 .. 180, y = 0 .. 18</div>
<svg class="a" style="left:648.00px;top:344.80px;overflow:visible" width="8" height="8" viewBox="-4 -4 8 8"><path d="M-1.6 -0.8 L0 0.8 L1.6 -0.8" fill="none" stroke="#62676b" stroke-width="0.7"/></svg>
<div class="a" style="left:516.30px;top:359.20px;width:5.70px;height:6.00px;background:#2e78a8;border-radius:1px"></div>
<svg class="a" style="left:516.3px;top:359.2px;overflow:visible" width="6" height="6" viewBox="0 0 6 6"><path d="M1.2 3.2L2.4 4.4L4.8 1.6" fill="none" stroke="#ffffff" stroke-width="0.9"/></svg>
<div class="t" style="left:523.60px;top:358.90px;font-size:4.5px;color:#eff0f1;font-weight:normal;">Visible</div>
<div class="a" style="left:649.70px;top:371.60px;width:10.30px;height:12.10px;background:#3a3e43;box-shadow:inset 0 0 0 1px #474b50;border-radius:1.5px"></div>
<div class="a" style="left:662.00px;top:371.60px;width:10.30px;height:12.10px;background:#3a3e43;box-shadow:inset 0 0 0 1px #474b50;border-radius:1.5px"></div>
<div class="a" style="left:674.00px;top:371.60px;width:10.30px;height:12.10px;background:#3a3e43;box-shadow:inset 0 0 0 1px #474b50;border-radius:1.5px"></div>
<svg class="a" style="left:652.40px;top:374.80px" width="6" height="6.5" viewBox="0 0 6 6.5"><path d="M0.8 0.6h2.8l1.6 1.6v3.8h-4.4z" fill="none" stroke="#c8c8c8" stroke-width="0.9"/></svg>
<svg class="a" style="left:664.70px;top:374.80px" width="6" height="6.5" viewBox="0 0 6 6.5"><rect x="0.7" y="0.7" width="4.6" height="5" fill="none" stroke="#e8e8e8" stroke-width="0.9"/><rect x="1.8" y="1.8" width="2.4" height="2.2" fill="#e8e8e8" opacity="0.7"/></svg>
<svg class="a" style="left:676.70px;top:374.80px" width="6" height="6.5" viewBox="0 0 6 6.5"><rect x="0.7" y="0.7" width="4.6" height="5" fill="none" stroke="#e8e8e8" stroke-width="0.9"/><rect x="1.8" y="1.8" width="2.4" height="2.2" fill="#e8e8e8" opacity="0.7"/></svg>

<svg class="a" style="left:0;top:0" width="752" height="423" viewBox="0 0 752 423"><rect x="201.7" y="70.6" width="300.2" height="300.3" fill="#fdf6e3"/><rect x="211.4" y="80.6" width="280.9" height="280.7" fill="none" stroke="#587079" stroke-width="0.9"/><line x1="278.08" y1="110.5" x2="278.08" y2="331.4" stroke="#d3d4ca" stroke-width="0.8"/><line x1="314.87" y1="110.5" x2="314.87" y2="331.4" stroke="#d3d4ca" stroke-width="0.8"/><line x1="351.65" y1="110.5" x2="351.65" y2="331.4" stroke="#d3d4ca" stroke-width="0.8"/><line x1="388.43" y1="110.5" x2="388.43" y2="331.4" stroke="#d3d4ca" stroke-width="0.8"/><line x1="425.22" y1="110.5" x2="425.22" y2="331.4" stroke="#d3d4ca" stroke-width="0.8"/><line x1="241.3" y1="294.58" x2="462.0" y2="294.58" stroke="#d3d4ca" stroke-width="0.8" stroke-dasharray="1.6 1"/><line x1="241.3" y1="257.77" x2="462.0" y2="257.77" stroke="#d3d4ca" stroke-width="0.8"/><line x1="241.3" y1="220.95" x2="462.0" y2="220.95" stroke="#d3d4ca" stroke-width="0.8" stroke-dasharray="1.6 1"/><line x1="241.3" y1="184.13" x2="462.0" y2="184.13" stroke="#d3d4ca" stroke-width="0.8"/><line x1="241.3" y1="147.32" x2="462.0" y2="147.32" stroke="#d3d4ca" stroke-width="0.8" stroke-dasharray="1.6 1"/><rect x="241.3" y="110.5" width="220.70" height="220.90" fill="none" stroke="#587079" stroke-width="1"/><line x1="241.30" y1="331.4" x2="241.30" y2="327.4" stroke="#587079" stroke-width="0.9"/><text x="241.30" y="341.2" font-size="6.9" text-anchor="middle" fill="#5a6e75" font-family="Liberation Sans">0</text><line x1="278.08" y1="331.4" x2="278.08" y2="327.4" stroke="#587079" stroke-width="0.9"/><text x="278.08" y="341.2" font-size="6.9" text-anchor="middle" fill="#5a6e75" font-family="Liberation Sans">30</text><line x1="314.87" y1="331.4" x2="314.87" y2="327.4" stroke="#587079" stroke-width="0.9"/><text x="314.87" y="341.2" font-size="6.9" text-anchor="middle" fill="#5a6e75" font-family="Liberation Sans">60</text><line x1="351.65" y1="331.4" x2="351.65" y2="327.4" stroke="#587079" stroke-width="0.9"/><text x="351.65" y="341.2" font-size="6.9" text-anchor="middle" fill="#5a6e75" font-family="Liberation Sans">90</text><line x1="388.43" y1="331.4" x2="388.43" y2="327.4" stroke="#587079" stroke-width="0.9"/><text x="388.43" y="341.2" font-size="6.9" text-anchor="middle" fill="#5a6e75" font-family="Liberation Sans">120</text><line x1="425.22" y1="331.4" x2="425.22" y2="327.4" stroke="#587079" stroke-width="0.9"/><text x="425.22" y="341.2" font-size="6.9" text-anchor="middle" fill="#5a6e75" font-family="Liberation Sans">150</text><line x1="462.00" y1="331.4" x2="462.00" y2="327.4" stroke="#587079" stroke-width="0.9"/><text x="462.00" y="341.2" font-size="6.9" text-anchor="middle" fill="#5a6e75" font-family="Liberation Sans">180</text><text x="238" y="333.90" font-size="6.9" text-anchor="end" fill="#5a6e75" font-family="Liberation Sans">0</text><text x="238" y="260.27" font-size="6.9" text-anchor="end" fill="#5a6e75" font-family="Liberation Sans">6</text><text x="238" y="186.63" font-size="6.9" text-anchor="end" fill="#5a6e75" font-family="Liberation Sans">12</text><text x="238" y="113.00" font-size="6.9" text-anchor="end" fill="#5a6e75" font-family="Liberation Sans">18</text><line x1="241.30" y1="110.5" x2="241.30" y2="113.7" stroke="#587079" stroke-width="0.9"/><line x1="263.37" y1="110.5" x2="263.37" y2="112.7" stroke="#587079" stroke-width="0.9"/><line x1="285.44" y1="110.5" x2="285.44" y2="113.7" stroke="#587079" stroke-width="0.9"/><line x1="307.51" y1="110.5" x2="307.51" y2="112.7" stroke="#587079" stroke-width="0.9"/><line x1="329.58" y1="110.5" x2="329.58" y2="113.7" stroke="#587079" stroke-width="0.9"/><line x1="351.65" y1="110.5" x2="351.65" y2="112.7" stroke="#587079" stroke-width="0.9"/><line x1="373.72" y1="110.5" x2="373.72" y2="113.7" stroke="#587079" stroke-width="0.9"/><line x1="395.79" y1="110.5" x2="395.79" y2="112.7" stroke="#587079" stroke-width="0.9"/><line x1="417.86" y1="110.5" x2="417.86" y2="113.7" stroke="#587079" stroke-width="0.9"/><line x1="439.93" y1="110.5" x2="439.93" y2="112.7" stroke="#587079" stroke-width="0.9"/><line x1="462.00" y1="110.5" x2="462.00" y2="113.7" stroke="#587079" stroke-width="0.9"/><line x1="462.0" y1="110.50" x2="458.0" y2="110.50" stroke="#587079" stroke-width="0.9"/><line x1="462.0" y1="154.68" x2="458.0" y2="154.68" stroke="#587079" stroke-width="0.9"/><line x1="462.0" y1="198.86" x2="458.0" y2="198.86" stroke="#587079" stroke-width="0.9"/><line x1="462.0" y1="243.04" x2="458.0" y2="243.04" stroke="#587079" stroke-width="0.9"/><line x1="462.0" y1="287.22" x2="458.0" y2="287.22" stroke="#587079" stroke-width="0.9"/><line x1="462.0" y1="331.40" x2="458.0" y2="331.40" stroke="#587079" stroke-width="0.9"/><text x="277.7" y="103.2" font-size="11.8" fill="#45616e" stroke="#45616e" stroke-width="0.25" font-family="Liberation Sans">El Niño-Southern Oscillation</text><text x="338.6" y="355.3" font-size="9" fill="#57707a" font-family="Liberation Mono">Month</text><text transform="translate(224.3 219.5) rotate(-90)" x="0" y="0" font-size="9.2" text-anchor="middle" fill="#57707a" font-family="Liberation Mono">Atmospheric Pressure</text><circle cx="242.53" cy="173.09" r="2.0" fill="#e3131b"/><circle cx="243.75" cy="192.72" r="2.0" fill="#e3131b"/><circle cx="244.98" cy="201.31" r="2.0" fill="#e3131b"/><circle cx="246.20" cy="193.95" r="2.0" fill="#e3131b"/><circle cx="247.43" cy="197.63" r="2.0" fill="#e3131b"/><circle cx="248.66" cy="239.36" r="2.0" fill="#e3131b"/><circle cx="249.88" cy="236.90" r="2.0" fill="#e3131b"/><circle cx="251.11" cy="187.81" r="2.0" fill="#e3131b"/><circle cx="252.34" cy="173.09" r="2.0" fill="#e3131b"/><circle cx="253.56" cy="155.91" r="2.0" fill="#e3131b"/><circle cx="254.79" cy="197.63" r="2.0" fill="#e3131b"/><circle cx="256.01" cy="163.27" r="2.0" fill="#e3131b"/><circle cx="257.24" cy="121.54" r="2.0" fill="#e3131b"/><circle cx="258.47" cy="159.59" r="2.0" fill="#e3131b"/><circle cx="259.69" cy="143.63" r="2.0" fill="#e3131b"/><circle cx="260.92" cy="227.09" r="2.0" fill="#e3131b"/><circle cx="262.14" cy="261.45" r="2.0" fill="#e3131b"/><circle cx="263.37" cy="263.90" r="2.0" fill="#e3131b"/><circle cx="264.60" cy="238.13" r="2.0" fill="#e3131b"/><circle cx="265.82" cy="225.86" r="2.0" fill="#e3131b"/><circle cx="267.05" cy="241.81" r="2.0" fill="#e3131b"/><circle cx="268.27" cy="238.13" r="2.0" fill="#e3131b"/><circle cx="269.50" cy="175.54" r="2.0" fill="#e3131b"/><circle cx="270.73" cy="196.41" r="2.0" fill="#e3131b"/><circle cx="271.95" cy="175.54" r="2.0" fill="#e3131b"/><circle cx="273.18" cy="173.09" r="2.0" fill="#e3131b"/><circle cx="274.41" cy="171.86" r="2.0" fill="#e3131b"/><circle cx="275.63" cy="197.63" r="2.0" fill="#e3131b"/><circle cx="276.86" cy="203.77" r="2.0" fill="#e3131b"/><circle cx="278.08" cy="206.22" r="2.0" fill="#e3131b"/><circle cx="279.31" cy="233.22" r="2.0" fill="#e3131b"/><circle cx="280.54" cy="197.63" r="2.0" fill="#e3131b"/><circle cx="281.76" cy="164.50" r="2.0" fill="#e3131b"/><circle cx="282.99" cy="202.54" r="2.0" fill="#e3131b"/><circle cx="284.21" cy="218.50" r="2.0" fill="#e3131b"/><circle cx="285.44" cy="179.22" r="2.0" fill="#e3131b"/><circle cx="286.67" cy="175.54" r="2.0" fill="#e3131b"/><circle cx="287.89" cy="168.18" r="2.0" fill="#e3131b"/><circle cx="289.12" cy="207.45" r="2.0" fill="#e3131b"/><circle cx="290.34" cy="235.68" r="2.0" fill="#e3131b"/><circle cx="291.57" cy="272.49" r="2.0" fill="#e3131b"/><circle cx="292.80" cy="294.58" r="2.0" fill="#e3131b"/><circle cx="294.02" cy="300.72" r="2.0" fill="#e3131b"/><circle cx="295.25" cy="254.08" r="2.0" fill="#e3131b"/><circle cx="296.48" cy="212.36" r="2.0" fill="#e3131b"/><circle cx="297.70" cy="189.04" r="2.0" fill="#e3131b"/><circle cx="298.93" cy="225.86" r="2.0" fill="#e3131b"/><circle cx="300.15" cy="179.22" r="2.0" fill="#e3131b"/><circle cx="301.38" cy="202.54" r="2.0" fill="#e3131b"/><circle cx="302.61" cy="168.18" r="2.0" fill="#e3131b"/><circle cx="303.83" cy="203.77" r="2.0" fill="#e3131b"/><circle cx="305.06" cy="232.00" r="2.0" fill="#e3131b"/><circle cx="306.28" cy="285.99" r="2.0" fill="#e3131b"/><circle cx="307.51" cy="200.09" r="2.0" fill="#e3131b"/><circle cx="308.74" cy="268.81" r="2.0" fill="#e3131b"/><circle cx="309.96" cy="203.77" r="2.0" fill="#e3131b"/><circle cx="311.19" cy="197.63" r="2.0" fill="#e3131b"/><circle cx="312.41" cy="187.81" r="2.0" fill="#e3131b"/><circle cx="313.64" cy="191.50" r="2.0" fill="#e3131b"/><circle cx="314.87" cy="163.27" r="2.0" fill="#e3131b"/><circle cx="316.09" cy="158.36" r="2.0" fill="#e3131b"/><circle cx="317.32" cy="159.59" r="2.0" fill="#e3131b"/><circle cx="318.55" cy="178.00" r="2.0" fill="#e3131b"/><circle cx="319.77" cy="254.08" r="2.0" fill="#e3131b"/><circle cx="321.00" cy="213.59" r="2.0" fill="#e3131b"/><circle cx="322.22" cy="187.81" r="2.0" fill="#e3131b"/><circle cx="323.45" cy="270.04" r="2.0" fill="#e3131b"/><circle cx="324.68" cy="198.86" r="2.0" fill="#e3131b"/><circle cx="325.90" cy="175.54" r="2.0" fill="#e3131b"/><circle cx="327.13" cy="198.86" r="2.0" fill="#e3131b"/><circle cx="328.35" cy="186.59" r="2.0" fill="#e3131b"/><circle cx="329.58" cy="176.77" r="2.0" fill="#e3131b"/><circle cx="330.81" cy="138.73" r="2.0" fill="#e3131b"/><circle cx="332.03" cy="176.77" r="2.0" fill="#e3131b"/><circle cx="333.26" cy="149.77" r="2.0" fill="#e3131b"/><circle cx="334.48" cy="235.68" r="2.0" fill="#e3131b"/><circle cx="335.71" cy="244.27" r="2.0" fill="#e3131b"/><circle cx="336.94" cy="193.95" r="2.0" fill="#e3131b"/><circle cx="338.16" cy="232.00" r="2.0" fill="#e3131b"/><circle cx="339.39" cy="252.86" r="2.0" fill="#e3131b"/><circle cx="340.62" cy="267.58" r="2.0" fill="#e3131b"/><circle cx="341.84" cy="184.13" r="2.0" fill="#e3131b"/><circle cx="343.07" cy="206.22" r="2.0" fill="#e3131b"/><circle cx="344.29" cy="175.54" r="2.0" fill="#e3131b"/><circle cx="345.52" cy="206.22" r="2.0" fill="#e3131b"/><circle cx="346.75" cy="151.00" r="2.0" fill="#e3131b"/><circle cx="347.97" cy="181.68" r="2.0" fill="#e3131b"/><circle cx="349.20" cy="244.27" r="2.0" fill="#e3131b"/><circle cx="350.42" cy="261.45" r="2.0" fill="#e3131b"/><circle cx="351.65" cy="249.18" r="2.0" fill="#e3131b"/><circle cx="352.88" cy="283.54" r="2.0" fill="#e3131b"/><circle cx="354.10" cy="227.09" r="2.0" fill="#e3131b"/><circle cx="355.33" cy="229.54" r="2.0" fill="#e3131b"/><circle cx="356.55" cy="198.86" r="2.0" fill="#e3131b"/><circle cx="357.78" cy="126.45" r="2.0" fill="#e3131b"/><circle cx="359.01" cy="176.77" r="2.0" fill="#e3131b"/><circle cx="360.23" cy="178.00" r="2.0" fill="#e3131b"/><circle cx="361.46" cy="178.00" r="2.0" fill="#e3131b"/><circle cx="362.69" cy="211.13" r="2.0" fill="#e3131b"/><circle cx="363.91" cy="243.04" r="2.0" fill="#e3131b"/><circle cx="365.14" cy="281.08" r="2.0" fill="#e3131b"/><circle cx="366.36" cy="201.31" r="2.0" fill="#e3131b"/><circle cx="367.59" cy="207.45" r="2.0" fill="#e3131b"/><circle cx="368.82" cy="207.45" r="2.0" fill="#e3131b"/><circle cx="370.04" cy="185.36" r="2.0" fill="#e3131b"/><circle cx="371.27" cy="164.50" r="2.0" fill="#e3131b"/><circle cx="372.49" cy="131.36" r="2.0" fill="#e3131b"/><circle cx="373.72" cy="115.41" r="2.0" fill="#e3131b"/><circle cx="374.95" cy="141.18" r="2.0" fill="#e3131b"/><circle cx="376.17" cy="135.04" r="2.0" fill="#e3131b"/><circle cx="377.40" cy="144.86" r="2.0" fill="#e3131b"/><circle cx="378.62" cy="193.95" r="2.0" fill="#e3131b"/><circle cx="379.85" cy="155.91" r="2.0" fill="#e3131b"/><circle cx="381.08" cy="153.45" r="2.0" fill="#e3131b"/><circle cx="382.30" cy="227.09" r="2.0" fill="#e3131b"/><circle cx="383.53" cy="184.13" r="2.0" fill="#e3131b"/><circle cx="384.75" cy="175.54" r="2.0" fill="#e3131b"/><circle cx="385.98" cy="192.72" r="2.0" fill="#e3131b"/><circle cx="387.21" cy="153.45" r="2.0" fill="#e3131b"/><circle cx="388.43" cy="146.09" r="2.0" fill="#e3131b"/><circle cx="389.66" cy="203.77" r="2.0" fill="#e3131b"/><circle cx="390.89" cy="190.27" r="2.0" fill="#e3131b"/><circle cx="392.11" cy="166.95" r="2.0" fill="#e3131b"/><circle cx="393.34" cy="239.36" r="2.0" fill="#e3131b"/><circle cx="394.56" cy="324.04" r="2.0" fill="#e3131b"/><circle cx="395.79" cy="327.72" r="2.0" fill="#e3131b"/><circle cx="397.02" cy="263.90" r="2.0" fill="#e3131b"/><circle cx="398.24" cy="270.04" r="2.0" fill="#e3131b"/><circle cx="399.47" cy="274.95" r="2.0" fill="#e3131b"/><circle cx="400.69" cy="230.77" r="2.0" fill="#e3131b"/><circle cx="401.92" cy="209.90" r="2.0" fill="#e3131b"/><circle cx="403.15" cy="218.50" r="2.0" fill="#e3131b"/><circle cx="404.37" cy="178.00" r="2.0" fill="#e3131b"/><circle cx="405.60" cy="197.63" r="2.0" fill="#e3131b"/><circle cx="406.83" cy="209.90" r="2.0" fill="#e3131b"/><circle cx="408.05" cy="222.18" r="2.0" fill="#e3131b"/><circle cx="409.28" cy="238.13" r="2.0" fill="#e3131b"/><circle cx="410.50" cy="214.81" r="2.0" fill="#e3131b"/><circle cx="411.73" cy="228.31" r="2.0" fill="#e3131b"/><circle cx="412.96" cy="200.09" r="2.0" fill="#e3131b"/><circle cx="414.18" cy="164.50" r="2.0" fill="#e3131b"/><circle cx="415.41" cy="163.27" r="2.0" fill="#e3131b"/><circle cx="416.63" cy="163.27" r="2.0" fill="#e3131b"/><circle cx="417.86" cy="128.91" r="2.0" fill="#e3131b"/><circle cx="419.09" cy="125.23" r="2.0" fill="#e3131b"/><circle cx="420.31" cy="121.54" r="2.0" fill="#e3131b"/><circle cx="421.54" cy="142.41" r="2.0" fill="#e3131b"/><circle cx="422.76" cy="214.81" r="2.0" fill="#e3131b"/><circle cx="423.99" cy="256.54" r="2.0" fill="#e3131b"/><circle cx="425.22" cy="207.45" r="2.0" fill="#e3131b"/><circle cx="426.44" cy="217.27" r="2.0" fill="#e3131b"/><circle cx="427.67" cy="266.36" r="2.0" fill="#e3131b"/><circle cx="428.89" cy="193.95" r="2.0" fill="#e3131b"/><circle cx="430.12" cy="127.68" r="2.0" fill="#e3131b"/><circle cx="431.35" cy="139.95" r="2.0" fill="#e3131b"/><circle cx="432.57" cy="184.13" r="2.0" fill="#e3131b"/><circle cx="433.80" cy="190.27" r="2.0" fill="#e3131b"/><circle cx="435.03" cy="225.86" r="2.0" fill="#e3131b"/><circle cx="436.25" cy="162.04" r="2.0" fill="#e3131b"/><circle cx="437.48" cy="224.63" r="2.0" fill="#e3131b"/><circle cx="438.70" cy="225.86" r="2.0" fill="#e3131b"/><circle cx="439.93" cy="225.86" r="2.0" fill="#e3131b"/><circle cx="441.16" cy="224.63" r="2.0" fill="#e3131b"/><circle cx="442.38" cy="174.32" r="2.0" fill="#e3131b"/><circle cx="443.61" cy="169.41" r="2.0" fill="#e3131b"/><circle cx="444.83" cy="159.59" r="2.0" fill="#e3131b"/><circle cx="446.06" cy="166.95" r="2.0" fill="#e3131b"/><circle cx="447.29" cy="149.77" r="2.0" fill="#e3131b"/><polyline points="242.04,155.34 242.24,156.66 242.45,166.77 242.65,166.93 242.86,162.74 243.07,163.73 243.27,169.63 243.48,176.78 243.68,175.20 243.89,170.56 244.10,180.19 244.30,190.92 244.51,186.10 244.71,184.19 244.92,194.77 245.13,201.88 245.33,201.91 245.54,201.45 245.74,205.23 245.95,215.74 246.16,220.05 246.36,213.48 246.57,217.28 246.78,230.85 246.98,231.22 247.19,225.50 247.39,230.25 247.60,237.81 247.81,240.29 248.01,237.79 248.22,234.74 248.42,241.35 248.63,248.64 248.84,240.95 249.04,235.18 249.25,244.14 249.45,247.25 249.66,239.06 249.87,235.42 250.07,237.70 250.28,239.98 250.48,237.04 250.69,227.40 250.90,225.68 251.10,232.96 251.31,227.34 251.51,214.32 251.72,215.29 251.93,219.33 252.13,212.62 252.34,204.17 252.55,200.35 252.75,201.35 252.96,201.59 253.16,191.20 253.37,182.43 253.58,188.36 253.78,189.03 253.99,176.10 254.19,171.23 254.40,175.77 254.61,174.76 254.81,168.59 255.02,162.52 255.22,162.50 255.43,168.49 255.64,164.70 255.84,154.08 256.05,158.14 256.25,166.71 256.46,161.00 256.67,155.03 256.87,159.54 257.08,164.91 257.28,166.03 257.49,162.41 257.70,161.16 257.90,171.15 258.11,177.15 258.32,169.50 258.52,170.37 258.73,183.28 258.93,186.63 259.14,182.83 259.35,185.47 259.55,192.88 259.76,200.35 259.96,201.14 260.17,197.33 260.38,205.25 260.58,217.71 260.79,214.69 260.99,210.54 261.20,220.65 261.41,228.79 261.61,227.39 261.82,226.13 262.02,229.13 262.23,237.08 262.44,241.16 262.64,234.14 262.85,233.79 263.05,245.62 263.26,246.30 263.47,237.16 263.67,238.75 263.88,245.29 264.09,245.02 264.29,240.27 264.50,235.51 264.70,238.09 264.91,243.47 265.12,235.54 265.32,225.65 265.53,231.28 265.73,234.55 265.94,224.06 266.15,217.28 266.35,218.67 266.56,218.99 266.76,214.62 266.97,204.95 267.18,200.55 267.38,206.27 267.59,202.47 267.79,188.22 268.00,186.90 268.21,192.50 268.41,186.44 268.62,177.19 268.82,174.52 269.03,175.84 269.24,176.64 269.44,169.14 269.65,160.70 269.86,166.34 270.06,170.88 270.27,160.28 270.47,155.09 270.68,162.40 270.89,164.44 271.09,159.63 271.30,156.44 271.50,158.39 271.71,165.70 271.92,166.19 272.12,158.06 272.33,162.00 272.53,174.17 272.74,172.31 272.95,166.67 273.15,173.18 273.36,181.45 273.56,183.73 273.77,182.53 273.98,182.86 274.18,192.50 274.39,201.17 274.59,195.89 274.80,195.13 275.01,208.72 275.21,214.55 275.42,209.91 275.63,212.01 275.83,219.98 276.04,226.30 276.24,227.21 276.45,223.34 276.66,228.16 276.86,239.90 277.07,237.78 277.27,230.34 277.48,237.68 277.69,245.88 277.89,242.23 278.10,238.24 278.30,239.75 278.51,244.51 278.72,246.67 278.92,238.89 279.13,234.27 279.33,242.92 279.54,243.78 279.75,231.69 279.95,229.24 280.16,234.86 280.36,232.62 280.57,225.26 280.78,219.36 280.98,219.09 281.19,222.45 281.40,215.20 281.60,202.92 281.81,205.48 282.01,209.89 282.22,199.18 282.43,190.01 282.63,191.66 282.84,192.15 283.04,187.30 283.25,178.98 283.46,174.24 283.66,179.31 283.87,178.60 284.07,165.61 284.28,163.05 284.49,171.19 284.69,168.06 284.90,159.13 285.10,158.48 285.31,162.08 285.52,164.23 285.72,160.25 285.93,153.97 286.13,159.81 286.34,168.27 286.55,161.51 286.75,156.37 286.96,166.04 287.17,172.01 287.37,168.62 287.58,167.63 287.78,172.01 287.99,180.19 288.20,183.80 288.40,178.34 288.61,181.48 288.81,195.51 289.02,197.19 289.23,191.11 289.43,197.63 289.64,208.01 289.84,210.37 290.05,209.49 290.26,210.49 290.46,218.49 290.67,227.46 290.87,223.55 291.08,220.04 291.29,231.82 291.49,238.91 291.70,232.48 291.90,231.80 292.11,239.12 292.32,243.39 292.52,242.37 292.73,237.56 292.93,238.67 293.14,247.79 293.35,245.84 293.55,235.08 293.76,238.15 293.97,245.83 294.17,240.22 294.38,232.62 294.58,232.43 294.79,234.62 295.00,234.29 295.20,226.03 295.41,218.32 295.61,223.57 295.82,225.05 296.03,211.69 296.23,205.55 296.44,210.87 296.64,208.54 296.85,199.36 297.06,193.32 297.26,192.28 297.47,194.51 297.67,189.08 297.88,176.86 298.09,177.44 298.29,183.96 298.50,175.47 298.70,165.28 298.91,168.13 299.12,171.00 299.32,166.95 299.53,160.90 299.74,157.93 299.94,163.39 300.15,166.29 300.35,156.54 300.56,153.68 300.77,164.42 300.97,165.69 301.18,157.85 301.38,159.03 301.59,165.86 301.80,169.69 302.00,168.65 302.21,165.19 302.41,171.17 302.62,182.38 302.83,179.67 303.03,174.39 303.24,184.82 303.44,194.34 303.65,191.86 303.86,191.30 304.06,197.36 304.27,205.52 304.47,210.14 304.68,206.46 304.89,207.84 305.09,221.31 305.30,225.30 305.51,217.91 305.71,222.08 305.92,233.10 306.12,234.58 306.33,231.82 306.54,232.15 306.74,237.63 306.95,244.68 307.15,240.97 307.36,234.25 307.57,242.22 307.77,249.41 307.98,241.07 308.18,236.17 308.39,241.91 308.60,244.21 308.80,240.25 309.01,234.04 309.21,231.99 309.42,237.74 309.63,235.81 309.83,222.86 310.04,221.48 310.24,228.61 310.45,222.50 310.66,211.69 310.86,210.23 311.07,211.52 311.28,209.39 311.48,201.42 311.69,192.72 311.89,195.49 312.10,198.39 312.31,186.12 312.51,177.64 312.72,183.47 312.92,183.31 313.13,173.84 313.34,168.63 313.54,169.04 313.75,171.54 313.95,168.77 314.16,158.83 314.37,158.79 314.57,167.87 314.78,163.55 314.98,153.71 315.19,157.96 315.40,164.65 315.60,162.44 315.81,158.66 316.01,158.58 316.22,165.03 316.43,171.01 316.63,165.27 316.84,162.54 317.05,174.83 317.25,180.64 317.46,174.07 317.66,175.77 317.87,185.45 318.08,190.63 318.28,190.94 318.49,189.65 318.69,195.16 318.90,207.05 319.11,207.38 319.31,201.34 319.52,210.28 319.72,221.89 319.93,219.55 320.14,217.24 320.34,223.42 320.55,230.60 320.75,234.00 320.96,230.62 321.17,229.46 321.37,240.13 321.58,244.88 321.78,235.73 321.99,235.67 322.20,245.80 322.40,246.09 322.61,240.00 322.82,238.51 323.02,241.41 323.23,245.37 323.43,241.05 323.64,231.61 323.85,235.02 324.05,241.65 324.26,232.32 324.46,223.10 324.67,226.97 324.88,228.45 325.08,221.88 325.29,214.47 325.49,210.82 325.70,213.82 325.91,212.32 326.11,199.19 326.32,194.44 326.52,201.53 326.73,197.03 326.94,184.54 327.14,182.56 327.35,185.05 327.55,182.71 327.76,175.93 327.97,168.50 328.17,170.39 328.38,175.38 328.59,166.41 328.79,157.33 329.00,164.17 329.20,167.98 329.41,159.87 329.62,155.91 329.82,159.25 330.03,163.28 330.23,163.25 330.44,156.85 330.65,157.22 330.85,168.41 331.06,168.96 331.26,160.33 331.47,165.24 331.68,175.82 331.88,175.86 332.09,173.33 332.29,175.87 332.50,183.24 332.71,190.81 332.91,188.45 333.12,185.63 333.32,197.56 333.53,206.72 333.74,201.02 333.94,201.30 334.15,212.26 334.36,218.05 334.56,217.65 334.77,216.94 334.97,221.16 335.18,231.48 335.39,233.12 335.59,225.68 335.80,231.03 336.00,242.82 336.21,240.04 336.42,234.25 336.62,238.82 336.83,244.50 337.03,245.16 337.24,240.68 337.45,236.90 337.65,243.49 337.86,247.75 338.06,237.19 338.27,232.25 338.48,240.47 338.68,240.14 338.89,230.62 339.09,226.82 339.30,228.04 339.51,229.11 339.71,224.07 339.92,213.36 340.13,212.88 340.33,218.98 340.54,210.41 340.74,198.13 340.95,200.46 341.16,202.92 341.36,195.29 341.57,187.40 341.77,184.17 341.98,186.04 342.19,185.70 342.39,174.59 342.60,168.37 342.80,176.03 343.01,175.12 343.22,162.98 343.42,161.14 343.63,166.53 343.83,165.78 344.04,160.75 344.25,156.16 344.45,158.72 344.66,165.93 344.86,161.49 345.07,153.28 345.28,160.91 345.48,169.30 345.69,163.68 345.90,160.58 346.10,167.00 346.31,173.17 346.51,175.05 346.72,172.02 346.93,173.10 347.13,185.06 347.34,189.77 347.54,182.45 347.75,186.48 347.96,199.65 348.16,201.62 348.37,198.68 348.57,202.31 348.78,209.97 348.99,217.14 349.19,216.46 349.40,212.92 349.60,222.40 349.81,232.88 350.02,227.42 350.22,224.42 350.43,234.57 350.63,240.21 350.84,237.42 351.05,235.42 351.25,237.75 351.46,244.92 351.66,246.14 351.87,237.12 352.08,237.71 352.28,248.03 352.49,244.86 352.70,235.01 352.90,236.75 353.11,241.18 353.31,238.87 353.52,232.56 353.73,226.89 353.93,229.58 354.14,232.84 354.34,222.05 354.55,213.03 354.76,219.14 354.96,219.52 355.17,207.87 355.37,202.03 355.58,203.14 355.79,202.81 355.99,197.61 356.20,187.54 356.40,184.95 356.61,191.08 356.82,185.20 357.02,172.01 357.23,173.49 357.43,178.67 357.64,172.12 357.85,164.57 358.05,163.44 358.26,166.14 358.47,167.55 358.67,160.02 358.88,154.25 359.08,162.75 359.29,166.52 359.50,156.50 359.70,154.96 359.91,163.83 360.11,165.95 360.32,162.56 360.53,161.09 360.73,165.22 360.94,174.01 361.14,173.90 361.35,167.25 361.56,174.68 361.76,186.79 361.97,183.94 362.17,180.56 362.38,188.80 362.59,196.87 362.79,199.21 363.00,198.06 363.20,199.41 363.41,210.34 363.62,217.31 363.82,210.79 364.03,212.16 364.24,225.72 364.44,228.87 364.65,223.87 364.85,226.44 365.06,233.51 365.27,238.60 365.47,237.55 365.68,232.68 365.88,238.22 366.09,247.93 366.30,242.29 366.50,235.01 366.71,242.49 366.91,247.65 367.12,241.85 367.33,237.20 367.53,237.66 367.74,241.35 367.94,241.08 368.15,230.99 368.36,227.07 368.56,235.10 368.77,232.29 368.97,219.26 369.18,217.85 369.39,221.99 369.59,217.91 369.80,209.94 370.01,203.75 370.21,204.03 370.42,206.62 370.62,197.26 370.83,186.13 371.04,190.63 371.24,193.32 371.45,181.76 371.65,174.73 371.86,177.31 372.07,177.73 372.27,173.24 372.48,165.46 372.68,162.95 372.89,169.75 373.10,167.97 373.30,156.09 373.51,157.30 373.71,166.13 373.92,162.56 374.13,155.86 374.33,157.49 374.54,162.49 374.74,165.74 374.95,162.12 375.16,158.04 375.36,167.03 375.57,175.18 375.78,168.19 375.98,166.44 376.19,177.94 376.39,183.27 376.60,180.72 376.81,181.24 377.01,186.86 377.22,195.97 377.42,198.66 377.63,193.33 377.84,199.10 378.04,212.90 378.25,212.28 378.45,207.20 378.66,215.06 378.87,224.13 379.07,225.38 379.28,223.94 379.48,224.72 379.69,233.01 379.90,239.93 380.10,233.50 380.31,230.93 380.51,242.58 380.72,246.13 380.93,238.15 381.13,237.75 381.34,243.61 381.55,245.90 381.75,242.90 381.96,236.51 382.16,237.79 382.37,245.34 382.58,239.66 382.78,228.45 382.99,232.29 383.19,237.25 383.40,229.22 383.61,221.54 383.81,220.81 384.02,222.09 384.22,220.29 384.43,210.26 384.64,203.40 384.84,209.32 385.05,208.12 385.25,193.95 385.46,189.99 385.67,195.12 385.87,191.42 386.08,182.69 386.28,177.49 386.49,177.58 386.70,180.35 386.90,173.92 387.11,163.10 387.32,166.82 387.52,172.98 387.73,163.85 387.93,156.55 388.14,161.52 388.35,164.65 388.55,161.59 388.76,156.86 388.96,156.14 389.17,163.93 389.38,166.50 389.58,157.44 389.79,158.48 389.99,170.63 390.20,171.03 390.41,165.07 390.61,168.78 390.82,176.51 391.02,181.03 391.23,180.28 391.44,178.07 391.64,186.61 391.85,197.50 392.05,193.41 392.26,190.41 392.47,202.53 392.67,210.43 392.88,207.53 393.09,207.96 393.29,214.18 393.50,222.16 393.70,225.37 393.91,220.51 394.12,223.26 394.32,236.26 394.53,236.88 394.73,229.03 394.94,234.19 395.15,243.20 395.35,242.41 395.56,238.68 395.76,238.07 395.97,242.97 396.18,247.99 396.38,241.18 396.59,234.46 396.79,242.61 397.00,246.23 397.21,235.58 397.41,231.20 397.62,235.79 397.82,235.87 398.03,230.38 398.24,222.91 398.44,220.98 398.65,226.09 398.86,221.10 399.06,207.58 399.27,207.95 399.47,213.55 399.68,205.22 399.89,195.19 400.09,194.37 400.30,195.29 400.50,192.80 400.71,184.18 400.92,176.73 401.12,181.43 401.33,183.05 401.53,170.25 401.74,164.88 401.95,172.01 402.15,170.98 402.36,162.68 402.56,159.43 402.77,161.40 402.98,165.23 403.18,162.45 403.39,153.91 403.59,157.52 403.80,167.31 404.01,162.21 404.21,155.22 404.42,162.36 404.62,169.22 404.83,167.79 405.04,165.60 405.24,167.32 405.45,175.80 405.66,181.69 405.86,175.78 406.07,176.17 406.27,190.03 406.48,194.18 406.69,188.32 406.89,192.29 407.10,202.07 407.30,206.85 407.51,206.94 407.72,205.76 407.92,212.65 408.13,223.91 408.33,221.71 408.54,216.42 408.75,226.68 408.95,235.86 409.16,231.63 409.36,229.70 409.57,235.28 409.78,241.14 409.98,242.73 410.19,237.34 410.39,236.41 410.60,246.57 410.81,247.54 411.01,236.76 411.22,237.63 411.43,245.80 411.63,243.09 411.84,236.02 412.04,233.70 412.25,235.67 412.46,238.04 412.66,230.92 412.87,221.12 413.07,225.41 413.28,229.34 413.49,217.55 413.69,209.44 413.90,213.26 414.10,212.85 414.31,205.52 414.52,197.90 414.72,194.78 414.93,198.26 415.13,194.98 415.34,181.56 415.55,179.56 415.75,186.71 415.96,180.49 416.16,169.51 416.37,169.58 416.58,172.38 416.78,170.51 416.99,164.26 417.20,158.45 417.40,163.07 417.61,168.08 417.81,158.73 418.02,153.07 418.23,162.40 418.43,165.59 418.64,158.64 418.84,157.34 419.05,162.31 419.26,167.66 419.46,168.09 419.67,162.67 419.87,166.33 420.08,178.71 420.29,177.98 420.49,171.28 420.70,179.19 420.90,189.50 421.11,189.30 421.32,188.03 421.52,191.59 421.73,199.98 421.93,207.13 422.14,203.57 422.35,202.46 422.55,215.68 422.76,222.36 422.97,215.76 423.17,217.68 423.38,228.04 423.58,232.08 423.79,230.77 424.00,229.29 424.20,233.60 424.41,242.93 424.61,241.34 424.82,233.22 425.03,239.58 425.23,248.71 425.44,242.88 425.64,237.05 425.85,240.93 426.06,244.60 426.26,243.36 426.47,236.84 426.67,232.66 426.88,239.07 427.09,240.01 427.29,227.28 427.50,223.56 427.70,230.72 427.91,227.35 428.12,217.21 428.32,213.46 428.53,214.05 428.74,214.30 428.94,207.52 429.15,196.66 429.35,197.96 429.56,202.85 429.77,192.18 429.97,181.69 430.18,185.51 430.38,186.82 430.59,179.16 430.80,172.36 431.00,170.32 431.21,173.57 431.41,172.86 431.62,161.84 431.83,158.96 432.03,168.17 432.24,166.05 432.44,155.61 432.65,156.93 432.86,163.16 433.06,163.06 433.27,159.32 433.47,156.45 433.68,161.76 433.89,169.77 434.09,164.78 434.30,159.44 434.51,170.10 434.71,177.78 434.92,172.51 435.12,172.05 435.33,179.79 435.54,186.47 435.74,188.62 435.95,185.84 436.15,189.08 436.36,202.08 436.57,204.78 436.77,197.87 436.98,204.40 437.18,216.74 437.39,217.03 437.60,214.56 437.80,218.43 438.01,225.80 438.21,231.94 438.42,229.21 438.63,225.86 438.83,236.14 439.04,243.68 439.24,235.83 439.45,233.77 439.66,243.09 439.86,245.93 440.07,241.65 440.28,238.60 440.48,240.18 440.69,246.22 440.89,244.24 441.10,233.66 441.31,235.24 441.51,243.48 441.72,236.77 441.92,226.81 442.13,228.55 442.34,231.00 442.54,227.08 442.75,219.49 442.95,213.50 443.16,216.64 443.37,217.79 443.57,204.99 443.78,197.71 443.98,204.26 444.19,202.21 444.40,190.44 444.60,186.00 444.81,187.27 445.01,186.93 445.22,181.34 445.43,171.70 445.63,171.65 445.84,178.18 446.05,170.84 446.25,159.80 446.46,164.21 446.66,169.08 446.87,162.81 447.08,157.38 447.28,158.02 447.49,162.44 447.69,164.46 447.90,157.24" fill="none" stroke="#2a9f98" stroke-width="1.3" stroke-linejoin="round"/><polyline points="247.17,233.89 247.37,228.95 247.58,238.50 247.78,233.07 247.98,242.09 248.19,236.11 248.39,244.55 248.60,237.96 248.80,245.80 249.01,238.59 249.21,245.80 249.42,237.96 249.62,244.55 249.82,236.11 250.03,242.09 250.23,233.07 250.44,238.50 250.64,228.95 250.85,233.89" fill="none" stroke="#34a4d8" stroke-width="0.9" stroke-linejoin="round"/><polyline points="254.52,175.62 254.73,165.82 254.93,171.00 255.14,161.70 255.34,167.41 255.55,158.67 255.75,164.95 255.95,156.81 256.16,163.70 256.36,156.18 256.57,163.70 256.77,156.81 256.98,164.95 257.18,158.67 257.39,167.41 257.59,161.70 257.79,171.00 258.00,165.82 258.20,175.62" fill="none" stroke="#34a4d8" stroke-width="0.9" stroke-linejoin="round"/><polyline points="261.88,233.89 262.09,228.95 262.29,238.50 262.49,233.07 262.70,242.09 262.90,236.11 263.11,244.55 263.31,237.96 263.52,245.80 263.72,238.59 263.92,245.80 264.13,237.96 264.33,244.55 264.54,236.11 264.74,242.09 264.95,233.07 265.15,238.50 265.35,228.95 265.56,233.89" fill="none" stroke="#34a4d8" stroke-width="0.9" stroke-linejoin="round"/><polyline points="269.24,175.62 269.44,165.82 269.65,171.00 269.85,161.70 270.05,167.41 270.26,158.67 270.46,164.95 270.67,156.81 270.87,163.70 271.08,156.18 271.28,163.70 271.49,156.81 271.69,164.95 271.89,158.67 272.10,167.41 272.30,161.70 272.51,171.00 272.71,165.82 272.92,175.62" fill="none" stroke="#34a4d8" stroke-width="0.9" stroke-linejoin="round"/><polyline points="276.59,233.89 276.80,228.95 277.00,238.50 277.21,233.07 277.41,242.09 277.62,236.11 277.82,244.55 278.02,237.96 278.23,245.80 278.43,238.59 278.64,245.80 278.84,237.96 279.05,244.55 279.25,236.11 279.46,242.09 279.66,233.07 279.86,238.50 280.07,228.95 280.27,233.89" fill="none" stroke="#34a4d8" stroke-width="0.9" stroke-linejoin="round"/><polyline points="283.95,175.62 284.16,165.82 284.36,171.00 284.56,161.70 284.77,167.41 284.97,158.67 285.18,164.95 285.38,156.81 285.59,163.70 285.79,156.18 285.99,163.70 286.20,156.81 286.40,164.95 286.61,158.67 286.81,167.41 287.02,161.70 287.22,171.00 287.42,165.82 287.63,175.62" fill="none" stroke="#34a4d8" stroke-width="0.9" stroke-linejoin="round"/><polyline points="291.31,233.89 291.51,228.95 291.72,238.50 291.92,233.07 292.12,242.09 292.33,236.11 292.53,244.55 292.74,237.96 292.94,245.80 293.15,238.59 293.35,245.80 293.56,237.96 293.76,244.55 293.96,236.11 294.17,242.09 294.37,233.07 294.58,238.50 294.78,228.95 294.99,233.89" fill="none" stroke="#34a4d8" stroke-width="0.9" stroke-linejoin="round"/><polyline points="298.66,175.62 298.87,165.82 299.07,171.00 299.28,161.70 299.48,167.41 299.69,158.67 299.89,164.95 300.09,156.81 300.30,163.70 300.50,156.18 300.71,163.70 300.91,156.81 301.12,164.95 301.32,158.67 301.53,167.41 301.73,161.70 301.93,171.00 302.14,165.82 302.34,175.62" fill="none" stroke="#34a4d8" stroke-width="0.9" stroke-linejoin="round"/><polyline points="306.02,233.89 306.23,228.95 306.43,238.50 306.63,233.07 306.84,242.09 307.04,236.11 307.25,244.55 307.45,237.96 307.66,245.80 307.86,238.59 308.06,245.80 308.27,237.96 308.47,244.55 308.68,236.11 308.88,242.09 309.09,233.07 309.29,238.50 309.49,228.95 309.70,233.89" fill="none" stroke="#34a4d8" stroke-width="0.9" stroke-linejoin="round"/><polyline points="313.38,175.62 313.58,165.82 313.79,171.00 313.99,161.70 314.19,167.41 314.40,158.67 314.60,164.95 314.81,156.81 315.01,163.70 315.22,156.18 315.42,163.70 315.63,156.81 315.83,164.95 316.03,158.67 316.24,167.41 316.44,161.70 316.65,171.00 316.85,165.82 317.06,175.62" fill="none" stroke="#34a4d8" stroke-width="0.9" stroke-linejoin="round"/><polyline points="320.73,233.89 320.94,228.95 321.14,238.50 321.35,233.07 321.55,242.09 321.76,236.11 321.96,244.55 322.16,237.96 322.37,245.80 322.57,238.59 322.78,245.80 322.98,237.96 323.19,244.55 323.39,236.11 323.60,242.09 323.80,233.07 324.00,238.50 324.21,228.95 324.41,233.89" fill="none" stroke="#34a4d8" stroke-width="0.9" stroke-linejoin="round"/><polyline points="328.09,175.62 328.30,165.82 328.50,171.00 328.70,161.70 328.91,167.41 329.11,158.67 329.32,164.95 329.52,156.81 329.73,163.70 329.93,156.18 330.13,163.70 330.34,156.81 330.54,164.95 330.75,158.67 330.95,167.41 331.16,161.70 331.36,171.00 331.56,165.82 331.77,175.62" fill="none" stroke="#34a4d8" stroke-width="0.9" stroke-linejoin="round"/><polyline points="335.45,233.89 335.65,228.95 335.86,238.50 336.06,233.07 336.26,242.09 336.47,236.11 336.67,244.55 336.88,237.96 337.08,245.80 337.29,238.59 337.49,245.80 337.70,237.96 337.90,244.55 338.10,236.11 338.31,242.09 338.51,233.07 338.72,238.50 338.92,228.95 339.13,233.89" fill="none" stroke="#34a4d8" stroke-width="0.9" stroke-linejoin="round"/><polyline points="342.80,175.62 343.01,165.82 343.21,171.00 343.42,161.70 343.62,167.41 343.83,158.67 344.03,164.95 344.23,156.81 344.44,163.70 344.64,156.18 344.85,163.70 345.05,156.81 345.26,164.95 345.46,158.67 345.67,167.41 345.87,161.70 346.07,171.00 346.28,165.82 346.48,175.62" fill="none" stroke="#34a4d8" stroke-width="0.9" stroke-linejoin="round"/><polyline points="350.16,233.89 350.37,228.95 350.57,238.50 350.77,233.07 350.98,242.09 351.18,236.11 351.39,244.55 351.59,237.96 351.80,245.80 352.00,238.59 352.20,245.80 352.41,237.96 352.61,244.55 352.82,236.11 353.02,242.09 353.23,233.07 353.43,238.50 353.63,228.95 353.84,233.89" fill="none" stroke="#34a4d8" stroke-width="0.9" stroke-linejoin="round"/><polyline points="357.52,175.62 357.72,165.82 357.93,171.00 358.13,161.70 358.33,167.41 358.54,158.67 358.74,164.95 358.95,156.81 359.15,163.70 359.36,156.18 359.56,163.70 359.77,156.81 359.97,164.95 360.17,158.67 360.38,167.41 360.58,161.70 360.79,171.00 360.99,165.82 361.20,175.62" fill="none" stroke="#34a4d8" stroke-width="0.9" stroke-linejoin="round"/><polyline points="364.87,233.89 365.08,228.95 365.28,238.50 365.49,233.07 365.69,242.09 365.90,236.11 366.10,244.55 366.30,237.96 366.51,245.80 366.71,238.59 366.92,245.80 367.12,237.96 367.33,244.55 367.53,236.11 367.74,242.09 367.94,233.07 368.14,238.50 368.35,228.95 368.55,233.89" fill="none" stroke="#34a4d8" stroke-width="0.9" stroke-linejoin="round"/><polyline points="372.23,175.62 372.44,165.82 372.64,171.00 372.84,161.70 373.05,167.41 373.25,158.67 373.46,164.95 373.66,156.81 373.87,163.70 374.07,156.18 374.27,163.70 374.48,156.81 374.68,164.95 374.89,158.67 375.09,167.41 375.30,161.70 375.50,171.00 375.70,165.82 375.91,175.62" fill="none" stroke="#34a4d8" stroke-width="0.9" stroke-linejoin="round"/><polyline points="379.59,233.89 379.79,228.95 380.00,238.50 380.20,233.07 380.40,242.09 380.61,236.11 380.81,244.55 381.02,237.96 381.22,245.80 381.43,238.59 381.63,245.80 381.84,237.96 382.04,244.55 382.24,236.11 382.45,242.09 382.65,233.07 382.86,238.50 383.06,228.95 383.27,233.89" fill="none" stroke="#34a4d8" stroke-width="0.9" stroke-linejoin="round"/><polyline points="386.94,175.62 387.15,165.82 387.35,171.00 387.56,161.70 387.76,167.41 387.97,158.67 388.17,164.95 388.37,156.81 388.58,163.70 388.78,156.18 388.99,163.70 389.19,156.81 389.40,164.95 389.60,158.67 389.81,167.41 390.01,161.70 390.21,171.00 390.42,165.82 390.62,175.62" fill="none" stroke="#34a4d8" stroke-width="0.9" stroke-linejoin="round"/><polyline points="394.30,233.89 394.51,228.95 394.71,238.50 394.91,233.07 395.12,242.09 395.32,236.11 395.53,244.55 395.73,237.96 395.94,245.80 396.14,238.59 396.34,245.80 396.55,237.96 396.75,244.55 396.96,236.11 397.16,242.09 397.37,233.07 397.57,238.50 397.77,228.95 397.98,233.89" fill="none" stroke="#34a4d8" stroke-width="0.9" stroke-linejoin="round"/><polyline points="401.66,175.62 401.86,165.82 402.07,171.00 402.27,161.70 402.47,167.41 402.68,158.67 402.88,164.95 403.09,156.81 403.29,163.70 403.50,156.18 403.70,163.70 403.91,156.81 404.11,164.95 404.31,158.67 404.52,167.41 404.72,161.70 404.93,171.00 405.13,165.82 405.34,175.62" fill="none" stroke="#34a4d8" stroke-width="0.9" stroke-linejoin="round"/><polyline points="409.01,233.89 409.22,228.95 409.42,238.50 409.63,233.07 409.83,242.09 410.04,236.11 410.24,244.55 410.44,237.96 410.65,245.80 410.85,238.59 411.06,245.80 411.26,237.96 411.47,244.55 411.67,236.11 411.88,242.09 412.08,233.07 412.28,238.50 412.49,228.95 412.69,233.89" fill="none" stroke="#34a4d8" stroke-width="0.9" stroke-linejoin="round"/><polyline points="416.37,175.62 416.58,165.82 416.78,171.00 416.98,161.70 417.19,167.41 417.39,158.67 417.60,164.95 417.80,156.81 418.01,163.70 418.21,156.18 418.41,163.70 418.62,156.81 418.82,164.95 419.03,158.67 419.23,167.41 419.44,161.70 419.64,171.00 419.84,165.82 420.05,175.62" fill="none" stroke="#34a4d8" stroke-width="0.9" stroke-linejoin="round"/><polyline points="423.73,233.89 423.93,228.95 424.14,238.50 424.34,233.07 424.54,242.09 424.75,236.11 424.95,244.55 425.16,237.96 425.36,245.80 425.57,238.59 425.77,245.80 425.98,237.96 426.18,244.55 426.38,236.11 426.59,242.09 426.79,233.07 427.00,238.50 427.20,228.95 427.41,233.89" fill="none" stroke="#34a4d8" stroke-width="0.9" stroke-linejoin="round"/><polyline points="431.08,175.62 431.29,165.82 431.49,171.00 431.70,161.70 431.90,167.41 432.11,158.67 432.31,164.95 432.51,156.81 432.72,163.70 432.92,156.18 433.13,163.70 433.33,156.81 433.54,164.95 433.74,158.67 433.95,167.41 434.15,161.70 434.35,171.00 434.56,165.82 434.76,175.62" fill="none" stroke="#34a4d8" stroke-width="0.9" stroke-linejoin="round"/><polyline points="438.44,233.89 438.65,228.95 438.85,238.50 439.05,233.07 439.26,242.09 439.46,236.11 439.67,244.55 439.87,237.96 440.08,245.80 440.28,238.59 440.48,245.80 440.69,237.96 440.89,244.55 441.10,236.11 441.30,242.09 441.51,233.07 441.71,238.50 441.91,228.95 442.12,233.89" fill="none" stroke="#34a4d8" stroke-width="0.9" stroke-linejoin="round"/><polyline points="445.80,175.62 446.00,165.82 446.21,171.00 446.41,161.70 446.61,167.41 446.82,158.67 447.02,164.95 447.23,156.81 447.43,163.70 447.64,156.18 447.84,163.70 447.90,156.44 447.90,163.81 447.90,156.44 447.90,163.81 447.90,156.44 447.90,163.81 447.90,156.44 447.90,163.81" fill="none" stroke="#34a4d8" stroke-width="0.9" stroke-linejoin="round"/><rect x="410.2" y="291.3" width="43.7" height="23.1" fill="#fdf6e3" stroke="#587079" stroke-width="0.9"/><circle cx="424" cy="299" r="2.0" fill="#e3131b"/><text x="436.6" y="302.4" font-size="7.3" fill="#48626e" font-family="Liberation Sans">data</text><line x1="414" y1="307.3" x2="434" y2="307.3" stroke="#8a9a20" stroke-width="1"/><text x="436.6" y="309.8" font-size="7.3" fill="#48626e" font-family="Liberation Sans">fit</text></svg>
</body></html>
